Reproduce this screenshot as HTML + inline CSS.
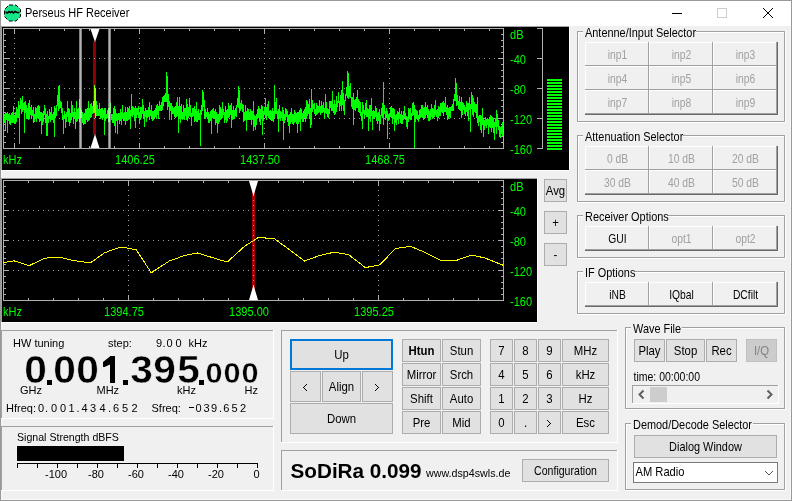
<!DOCTYPE html>
<html><head><meta charset="utf-8"><title>Perseus HF Receiver</title>
<style>html,body{margin:0;padding:0;width:792px;height:501px;overflow:hidden;background:#f0f0f0;font-family:"Liberation Sans", sans-serif}
text{shape-rendering:auto}</style></head>
<body><svg width="792" height="501" viewBox="0 0 792 501" shape-rendering="crispEdges" style="display:block;font-family:'Liberation Sans', sans-serif"><rect x="0" y="0" width="792" height="501" fill="#f0f0f0"/><rect x="0" y="0" width="792" height="26" fill="#ffffff"/><rect x="1" y="26" width="1" height="474" fill="#f8f8f8"/><rect x="790" y="26" width="1" height="474" fill="#f8f8f8"/><rect x="1" y="499" width="790" height="1" fill="#f8f8f8"/><rect x="0" y="0" width="792" height="1" fill="#999999"/><rect x="0" y="0" width="1" height="501" fill="#999999"/><rect x="791" y="0" width="1" height="501" fill="#999999"/><rect x="0" y="500" width="792" height="1" fill="#999999"/><text transform="translate(25,17) scale(0.915,1)" font-size="12" fill="#000" text-anchor="start" font-weight="normal">Perseus HF Receiver</text><polygon points="9,5 16,5 20.5,9.5 20.5,16.5 16,21 9,21 4.5,16.5 4.5,9.5" fill="#17e58a" stroke="#000" stroke-width="1" stroke-dasharray="4,2" shape-rendering="auto"/><path d="M5.5,12 L7.5,13 L9,11.5 L10.5,12.5 L12,11.5 L13.5,13 L15,11.5 L17,12.5 L19.5,12.5" fill="none" stroke="#000" stroke-width="1.6" shape-rendering="auto"/><rect x="672" y="13" width="10" height="1" fill="#000"/><rect x="717.5" y="8.5" width="9" height="9" fill="none" stroke="#cccccc" stroke-width="1"/><path d="M763,8 L773,18 M773,8 L763,18" stroke="#000" stroke-width="1.1"/><rect x="577" y="31" width="208" height="1" fill="#a0a0a0"/><rect x="577" y="31" width="1" height="91" fill="#a0a0a0"/><rect x="577" y="121" width="208" height="1" fill="#a0a0a0"/><rect x="784" y="31" width="1" height="91" fill="#a0a0a0"/><rect x="578" y="32" width="206" height="1" fill="#ffffff"/><rect x="578" y="32" width="1" height="89" fill="#ffffff"/><rect x="577" y="122" width="209" height="1" fill="#ffffff"/><rect x="785" y="31" width="1" height="92" fill="#ffffff"/><rect x="583" y="28" width="113" height="6" fill="#f0f0f0"/><text transform="translate(585,37) scale(0.91,1)" font-size="12" fill="#000" text-anchor="start" font-weight="normal">Antenne/Input Selector</text><rect x="585" y="42" width="64" height="24" fill="#a0a0a0"/><rect x="585" y="42" width="63" height="23" fill="#ffffff"/><rect x="586" y="43" width="62" height="22" fill="#f0f0f0"/><text transform="translate(617.5,59.0) scale(0.86,1)" font-size="12" fill="#a0a0a0" text-anchor="middle" font-weight="normal">inp1</text><rect x="649" y="42" width="64" height="24" fill="#a0a0a0"/><rect x="649" y="42" width="63" height="23" fill="#ffffff"/><rect x="650" y="43" width="62" height="22" fill="#f0f0f0"/><text transform="translate(681.5,59.0) scale(0.86,1)" font-size="12" fill="#a0a0a0" text-anchor="middle" font-weight="normal">inp2</text><rect x="713" y="42" width="64" height="24" fill="#a0a0a0"/><rect x="713" y="42" width="63" height="23" fill="#ffffff"/><rect x="714" y="43" width="62" height="22" fill="#f0f0f0"/><text transform="translate(745.5,59.0) scale(0.86,1)" font-size="12" fill="#a0a0a0" text-anchor="middle" font-weight="normal">inp3</text><rect x="585" y="66" width="64" height="24" fill="#a0a0a0"/><rect x="585" y="66" width="63" height="23" fill="#ffffff"/><rect x="586" y="67" width="62" height="22" fill="#f0f0f0"/><text transform="translate(617.5,83.0) scale(0.86,1)" font-size="12" fill="#a0a0a0" text-anchor="middle" font-weight="normal">inp4</text><rect x="649" y="66" width="64" height="24" fill="#a0a0a0"/><rect x="649" y="66" width="63" height="23" fill="#ffffff"/><rect x="650" y="67" width="62" height="22" fill="#f0f0f0"/><text transform="translate(681.5,83.0) scale(0.86,1)" font-size="12" fill="#a0a0a0" text-anchor="middle" font-weight="normal">inp5</text><rect x="713" y="66" width="64" height="24" fill="#a0a0a0"/><rect x="713" y="66" width="63" height="23" fill="#ffffff"/><rect x="714" y="67" width="62" height="22" fill="#f0f0f0"/><text transform="translate(745.5,83.0) scale(0.86,1)" font-size="12" fill="#a0a0a0" text-anchor="middle" font-weight="normal">inp6</text><rect x="585" y="90" width="64" height="24" fill="#a0a0a0"/><rect x="585" y="90" width="63" height="23" fill="#ffffff"/><rect x="586" y="91" width="62" height="22" fill="#f0f0f0"/><text transform="translate(617.5,107.0) scale(0.86,1)" font-size="12" fill="#a0a0a0" text-anchor="middle" font-weight="normal">inp7</text><rect x="649" y="90" width="64" height="24" fill="#a0a0a0"/><rect x="649" y="90" width="63" height="23" fill="#ffffff"/><rect x="650" y="91" width="62" height="22" fill="#f0f0f0"/><text transform="translate(681.5,107.0) scale(0.86,1)" font-size="12" fill="#a0a0a0" text-anchor="middle" font-weight="normal">inp8</text><rect x="713" y="90" width="64" height="24" fill="#a0a0a0"/><rect x="713" y="90" width="63" height="23" fill="#ffffff"/><rect x="714" y="91" width="62" height="22" fill="#f0f0f0"/><text transform="translate(745.5,107.0) scale(0.86,1)" font-size="12" fill="#a0a0a0" text-anchor="middle" font-weight="normal">inp9</text><rect x="585" y="114" width="193" height="1" fill="#696969"/><rect x="777" y="42" width="1" height="73" fill="#696969"/><rect x="577" y="135" width="208" height="1" fill="#a0a0a0"/><rect x="577" y="135" width="1" height="67" fill="#a0a0a0"/><rect x="577" y="201" width="208" height="1" fill="#a0a0a0"/><rect x="784" y="135" width="1" height="67" fill="#a0a0a0"/><rect x="578" y="136" width="206" height="1" fill="#ffffff"/><rect x="578" y="136" width="1" height="65" fill="#ffffff"/><rect x="577" y="202" width="209" height="1" fill="#ffffff"/><rect x="785" y="135" width="1" height="68" fill="#ffffff"/><rect x="583" y="132" width="100" height="6" fill="#f0f0f0"/><text transform="translate(585,141) scale(0.91,1)" font-size="12" fill="#000" text-anchor="start" font-weight="normal">Attenuation Selector</text><rect x="585" y="146" width="64" height="24" fill="#a0a0a0"/><rect x="585" y="146" width="63" height="23" fill="#ffffff"/><rect x="586" y="147" width="62" height="22" fill="#f0f0f0"/><text transform="translate(617.5,163.0) scale(0.86,1)" font-size="12" fill="#a0a0a0" text-anchor="middle" font-weight="normal">0 dB</text><rect x="649" y="146" width="64" height="24" fill="#a0a0a0"/><rect x="649" y="146" width="63" height="23" fill="#ffffff"/><rect x="650" y="147" width="62" height="22" fill="#f0f0f0"/><text transform="translate(681.5,163.0) scale(0.86,1)" font-size="12" fill="#a0a0a0" text-anchor="middle" font-weight="normal">10 dB</text><rect x="713" y="146" width="64" height="24" fill="#a0a0a0"/><rect x="713" y="146" width="63" height="23" fill="#ffffff"/><rect x="714" y="147" width="62" height="22" fill="#f0f0f0"/><text transform="translate(745.5,163.0) scale(0.86,1)" font-size="12" fill="#a0a0a0" text-anchor="middle" font-weight="normal">20 dB</text><rect x="585" y="170" width="64" height="24" fill="#a0a0a0"/><rect x="585" y="170" width="63" height="23" fill="#ffffff"/><rect x="586" y="171" width="62" height="22" fill="#f0f0f0"/><text transform="translate(617.5,187.0) scale(0.86,1)" font-size="12" fill="#a0a0a0" text-anchor="middle" font-weight="normal">30 dB</text><rect x="649" y="170" width="64" height="24" fill="#a0a0a0"/><rect x="649" y="170" width="63" height="23" fill="#ffffff"/><rect x="650" y="171" width="62" height="22" fill="#f0f0f0"/><text transform="translate(681.5,187.0) scale(0.86,1)" font-size="12" fill="#a0a0a0" text-anchor="middle" font-weight="normal">40 dB</text><rect x="713" y="170" width="64" height="24" fill="#a0a0a0"/><rect x="713" y="170" width="63" height="23" fill="#ffffff"/><rect x="714" y="171" width="62" height="22" fill="#f0f0f0"/><text transform="translate(745.5,187.0) scale(0.86,1)" font-size="12" fill="#a0a0a0" text-anchor="middle" font-weight="normal">50 dB</text><rect x="585" y="194" width="193" height="1" fill="#696969"/><rect x="777" y="146" width="1" height="49" fill="#696969"/><rect x="577" y="215" width="208" height="1" fill="#a0a0a0"/><rect x="577" y="215" width="1" height="43" fill="#a0a0a0"/><rect x="577" y="257" width="208" height="1" fill="#a0a0a0"/><rect x="784" y="215" width="1" height="43" fill="#a0a0a0"/><rect x="578" y="216" width="206" height="1" fill="#ffffff"/><rect x="578" y="216" width="1" height="41" fill="#ffffff"/><rect x="577" y="258" width="209" height="1" fill="#ffffff"/><rect x="785" y="215" width="1" height="44" fill="#ffffff"/><rect x="583" y="212" width="85" height="6" fill="#f0f0f0"/><text transform="translate(585,221) scale(0.91,1)" font-size="12" fill="#000" text-anchor="start" font-weight="normal">Receiver Options</text><rect x="585" y="226" width="64" height="24" fill="#a0a0a0"/><rect x="585" y="226" width="63" height="23" fill="#ffffff"/><rect x="586" y="227" width="62" height="22" fill="#f0f0f0"/><text transform="translate(617.5,243.0) scale(0.86,1)" font-size="12" fill="#000" text-anchor="middle" font-weight="normal">GUI</text><rect x="649" y="226" width="64" height="24" fill="#a0a0a0"/><rect x="649" y="226" width="63" height="23" fill="#ffffff"/><rect x="650" y="227" width="62" height="22" fill="#f0f0f0"/><text transform="translate(681.5,243.0) scale(0.86,1)" font-size="12" fill="#a0a0a0" text-anchor="middle" font-weight="normal">opt1</text><rect x="713" y="226" width="64" height="24" fill="#a0a0a0"/><rect x="713" y="226" width="63" height="23" fill="#ffffff"/><rect x="714" y="227" width="62" height="22" fill="#f0f0f0"/><text transform="translate(745.5,243.0) scale(0.86,1)" font-size="12" fill="#a0a0a0" text-anchor="middle" font-weight="normal">opt2</text><rect x="585" y="250" width="193" height="1" fill="#696969"/><rect x="777" y="226" width="1" height="25" fill="#696969"/><rect x="577" y="271" width="208" height="1" fill="#a0a0a0"/><rect x="577" y="271" width="1" height="43" fill="#a0a0a0"/><rect x="577" y="313" width="208" height="1" fill="#a0a0a0"/><rect x="784" y="271" width="1" height="43" fill="#a0a0a0"/><rect x="578" y="272" width="206" height="1" fill="#ffffff"/><rect x="578" y="272" width="1" height="41" fill="#ffffff"/><rect x="577" y="314" width="209" height="1" fill="#ffffff"/><rect x="785" y="271" width="1" height="44" fill="#ffffff"/><rect x="583" y="268" width="52" height="6" fill="#f0f0f0"/><text transform="translate(585,277) scale(0.91,1)" font-size="12" fill="#000" text-anchor="start" font-weight="normal">IF Options</text><rect x="585" y="282" width="64" height="24" fill="#a0a0a0"/><rect x="585" y="282" width="63" height="23" fill="#ffffff"/><rect x="586" y="283" width="62" height="22" fill="#f0f0f0"/><text transform="translate(617.5,299.0) scale(0.86,1)" font-size="12" fill="#000" text-anchor="middle" font-weight="normal">iNB</text><rect x="649" y="282" width="64" height="24" fill="#a0a0a0"/><rect x="649" y="282" width="63" height="23" fill="#ffffff"/><rect x="650" y="283" width="62" height="22" fill="#f0f0f0"/><text transform="translate(681.5,299.0) scale(0.86,1)" font-size="12" fill="#000" text-anchor="middle" font-weight="normal">IQbal</text><rect x="713" y="282" width="64" height="24" fill="#a0a0a0"/><rect x="713" y="282" width="63" height="23" fill="#ffffff"/><rect x="714" y="283" width="62" height="22" fill="#f0f0f0"/><text transform="translate(745.5,299.0) scale(0.86,1)" font-size="12" fill="#000" text-anchor="middle" font-weight="normal">DCfilt</text><rect x="585" y="306" width="193" height="1" fill="#696969"/><rect x="777" y="282" width="1" height="25" fill="#696969"/><rect x="2" y="27" width="567" height="143" fill="#000"/><rect x="1" y="26" width="568" height="1" fill="#a0a0a0"/><rect x="1" y="26" width="1" height="144" fill="#a0a0a0"/><rect x="569" y="26" width="1" height="145" fill="#ffffff"/><rect x="1" y="170" width="569" height="1" fill="#ffffff"/><rect x="9" y="58" width="1" height="1" fill="#a0a0a0"/><rect x="14" y="58" width="1" height="1" fill="#a0a0a0"/><rect x="19" y="58" width="1" height="1" fill="#a0a0a0"/><rect x="24" y="58" width="1" height="1" fill="#a0a0a0"/><rect x="29" y="58" width="1" height="1" fill="#a0a0a0"/><rect x="34" y="58" width="1" height="1" fill="#a0a0a0"/><rect x="39" y="58" width="1" height="1" fill="#a0a0a0"/><rect x="44" y="58" width="1" height="1" fill="#a0a0a0"/><rect x="49" y="58" width="1" height="1" fill="#a0a0a0"/><rect x="54" y="58" width="1" height="1" fill="#a0a0a0"/><rect x="59" y="58" width="1" height="1" fill="#a0a0a0"/><rect x="64" y="58" width="1" height="1" fill="#a0a0a0"/><rect x="69" y="58" width="1" height="1" fill="#a0a0a0"/><rect x="74" y="58" width="1" height="1" fill="#a0a0a0"/><rect x="79" y="58" width="1" height="1" fill="#a0a0a0"/><rect x="84" y="58" width="1" height="1" fill="#a0a0a0"/><rect x="89" y="58" width="1" height="1" fill="#a0a0a0"/><rect x="94" y="58" width="1" height="1" fill="#a0a0a0"/><rect x="99" y="58" width="1" height="1" fill="#a0a0a0"/><rect x="104" y="58" width="1" height="1" fill="#a0a0a0"/><rect x="109" y="58" width="1" height="1" fill="#a0a0a0"/><rect x="114" y="58" width="1" height="1" fill="#a0a0a0"/><rect x="119" y="58" width="1" height="1" fill="#a0a0a0"/><rect x="124" y="58" width="1" height="1" fill="#a0a0a0"/><rect x="129" y="58" width="1" height="1" fill="#a0a0a0"/><rect x="134" y="58" width="1" height="1" fill="#a0a0a0"/><rect x="139" y="58" width="1" height="1" fill="#a0a0a0"/><rect x="144" y="58" width="1" height="1" fill="#a0a0a0"/><rect x="149" y="58" width="1" height="1" fill="#a0a0a0"/><rect x="154" y="58" width="1" height="1" fill="#a0a0a0"/><rect x="159" y="58" width="1" height="1" fill="#a0a0a0"/><rect x="164" y="58" width="1" height="1" fill="#a0a0a0"/><rect x="169" y="58" width="1" height="1" fill="#a0a0a0"/><rect x="174" y="58" width="1" height="1" fill="#a0a0a0"/><rect x="179" y="58" width="1" height="1" fill="#a0a0a0"/><rect x="184" y="58" width="1" height="1" fill="#a0a0a0"/><rect x="189" y="58" width="1" height="1" fill="#a0a0a0"/><rect x="194" y="58" width="1" height="1" fill="#a0a0a0"/><rect x="199" y="58" width="1" height="1" fill="#a0a0a0"/><rect x="204" y="58" width="1" height="1" fill="#a0a0a0"/><rect x="209" y="58" width="1" height="1" fill="#a0a0a0"/><rect x="214" y="58" width="1" height="1" fill="#a0a0a0"/><rect x="219" y="58" width="1" height="1" fill="#a0a0a0"/><rect x="224" y="58" width="1" height="1" fill="#a0a0a0"/><rect x="229" y="58" width="1" height="1" fill="#a0a0a0"/><rect x="234" y="58" width="1" height="1" fill="#a0a0a0"/><rect x="239" y="58" width="1" height="1" fill="#a0a0a0"/><rect x="244" y="58" width="1" height="1" fill="#a0a0a0"/><rect x="249" y="58" width="1" height="1" fill="#a0a0a0"/><rect x="254" y="58" width="1" height="1" fill="#a0a0a0"/><rect x="259" y="58" width="1" height="1" fill="#a0a0a0"/><rect x="264" y="58" width="1" height="1" fill="#a0a0a0"/><rect x="269" y="58" width="1" height="1" fill="#a0a0a0"/><rect x="274" y="58" width="1" height="1" fill="#a0a0a0"/><rect x="279" y="58" width="1" height="1" fill="#a0a0a0"/><rect x="284" y="58" width="1" height="1" fill="#a0a0a0"/><rect x="289" y="58" width="1" height="1" fill="#a0a0a0"/><rect x="294" y="58" width="1" height="1" fill="#a0a0a0"/><rect x="299" y="58" width="1" height="1" fill="#a0a0a0"/><rect x="304" y="58" width="1" height="1" fill="#a0a0a0"/><rect x="309" y="58" width="1" height="1" fill="#a0a0a0"/><rect x="314" y="58" width="1" height="1" fill="#a0a0a0"/><rect x="319" y="58" width="1" height="1" fill="#a0a0a0"/><rect x="324" y="58" width="1" height="1" fill="#a0a0a0"/><rect x="329" y="58" width="1" height="1" fill="#a0a0a0"/><rect x="334" y="58" width="1" height="1" fill="#a0a0a0"/><rect x="339" y="58" width="1" height="1" fill="#a0a0a0"/><rect x="344" y="58" width="1" height="1" fill="#a0a0a0"/><rect x="349" y="58" width="1" height="1" fill="#a0a0a0"/><rect x="354" y="58" width="1" height="1" fill="#a0a0a0"/><rect x="359" y="58" width="1" height="1" fill="#a0a0a0"/><rect x="364" y="58" width="1" height="1" fill="#a0a0a0"/><rect x="369" y="58" width="1" height="1" fill="#a0a0a0"/><rect x="374" y="58" width="1" height="1" fill="#a0a0a0"/><rect x="379" y="58" width="1" height="1" fill="#a0a0a0"/><rect x="384" y="58" width="1" height="1" fill="#a0a0a0"/><rect x="389" y="58" width="1" height="1" fill="#a0a0a0"/><rect x="394" y="58" width="1" height="1" fill="#a0a0a0"/><rect x="399" y="58" width="1" height="1" fill="#a0a0a0"/><rect x="404" y="58" width="1" height="1" fill="#a0a0a0"/><rect x="409" y="58" width="1" height="1" fill="#a0a0a0"/><rect x="414" y="58" width="1" height="1" fill="#a0a0a0"/><rect x="419" y="58" width="1" height="1" fill="#a0a0a0"/><rect x="424" y="58" width="1" height="1" fill="#a0a0a0"/><rect x="429" y="58" width="1" height="1" fill="#a0a0a0"/><rect x="434" y="58" width="1" height="1" fill="#a0a0a0"/><rect x="439" y="58" width="1" height="1" fill="#a0a0a0"/><rect x="444" y="58" width="1" height="1" fill="#a0a0a0"/><rect x="449" y="58" width="1" height="1" fill="#a0a0a0"/><rect x="454" y="58" width="1" height="1" fill="#a0a0a0"/><rect x="459" y="58" width="1" height="1" fill="#a0a0a0"/><rect x="464" y="58" width="1" height="1" fill="#a0a0a0"/><rect x="469" y="58" width="1" height="1" fill="#a0a0a0"/><rect x="474" y="58" width="1" height="1" fill="#a0a0a0"/><rect x="479" y="58" width="1" height="1" fill="#a0a0a0"/><rect x="484" y="58" width="1" height="1" fill="#a0a0a0"/><rect x="489" y="58" width="1" height="1" fill="#a0a0a0"/><rect x="494" y="58" width="1" height="1" fill="#a0a0a0"/><rect x="499" y="58" width="1" height="1" fill="#a0a0a0"/><rect x="9" y="88" width="1" height="1" fill="#a0a0a0"/><rect x="14" y="88" width="1" height="1" fill="#a0a0a0"/><rect x="19" y="88" width="1" height="1" fill="#a0a0a0"/><rect x="24" y="88" width="1" height="1" fill="#a0a0a0"/><rect x="29" y="88" width="1" height="1" fill="#a0a0a0"/><rect x="34" y="88" width="1" height="1" fill="#a0a0a0"/><rect x="39" y="88" width="1" height="1" fill="#a0a0a0"/><rect x="44" y="88" width="1" height="1" fill="#a0a0a0"/><rect x="49" y="88" width="1" height="1" fill="#a0a0a0"/><rect x="54" y="88" width="1" height="1" fill="#a0a0a0"/><rect x="59" y="88" width="1" height="1" fill="#a0a0a0"/><rect x="64" y="88" width="1" height="1" fill="#a0a0a0"/><rect x="69" y="88" width="1" height="1" fill="#a0a0a0"/><rect x="74" y="88" width="1" height="1" fill="#a0a0a0"/><rect x="79" y="88" width="1" height="1" fill="#a0a0a0"/><rect x="84" y="88" width="1" height="1" fill="#a0a0a0"/><rect x="89" y="88" width="1" height="1" fill="#a0a0a0"/><rect x="94" y="88" width="1" height="1" fill="#a0a0a0"/><rect x="99" y="88" width="1" height="1" fill="#a0a0a0"/><rect x="104" y="88" width="1" height="1" fill="#a0a0a0"/><rect x="109" y="88" width="1" height="1" fill="#a0a0a0"/><rect x="114" y="88" width="1" height="1" fill="#a0a0a0"/><rect x="119" y="88" width="1" height="1" fill="#a0a0a0"/><rect x="124" y="88" width="1" height="1" fill="#a0a0a0"/><rect x="129" y="88" width="1" height="1" fill="#a0a0a0"/><rect x="134" y="88" width="1" height="1" fill="#a0a0a0"/><rect x="139" y="88" width="1" height="1" fill="#a0a0a0"/><rect x="144" y="88" width="1" height="1" fill="#a0a0a0"/><rect x="149" y="88" width="1" height="1" fill="#a0a0a0"/><rect x="154" y="88" width="1" height="1" fill="#a0a0a0"/><rect x="159" y="88" width="1" height="1" fill="#a0a0a0"/><rect x="164" y="88" width="1" height="1" fill="#a0a0a0"/><rect x="169" y="88" width="1" height="1" fill="#a0a0a0"/><rect x="174" y="88" width="1" height="1" fill="#a0a0a0"/><rect x="179" y="88" width="1" height="1" fill="#a0a0a0"/><rect x="184" y="88" width="1" height="1" fill="#a0a0a0"/><rect x="189" y="88" width="1" height="1" fill="#a0a0a0"/><rect x="194" y="88" width="1" height="1" fill="#a0a0a0"/><rect x="199" y="88" width="1" height="1" fill="#a0a0a0"/><rect x="204" y="88" width="1" height="1" fill="#a0a0a0"/><rect x="209" y="88" width="1" height="1" fill="#a0a0a0"/><rect x="214" y="88" width="1" height="1" fill="#a0a0a0"/><rect x="219" y="88" width="1" height="1" fill="#a0a0a0"/><rect x="224" y="88" width="1" height="1" fill="#a0a0a0"/><rect x="229" y="88" width="1" height="1" fill="#a0a0a0"/><rect x="234" y="88" width="1" height="1" fill="#a0a0a0"/><rect x="239" y="88" width="1" height="1" fill="#a0a0a0"/><rect x="244" y="88" width="1" height="1" fill="#a0a0a0"/><rect x="249" y="88" width="1" height="1" fill="#a0a0a0"/><rect x="254" y="88" width="1" height="1" fill="#a0a0a0"/><rect x="259" y="88" width="1" height="1" fill="#a0a0a0"/><rect x="264" y="88" width="1" height="1" fill="#a0a0a0"/><rect x="269" y="88" width="1" height="1" fill="#a0a0a0"/><rect x="274" y="88" width="1" height="1" fill="#a0a0a0"/><rect x="279" y="88" width="1" height="1" fill="#a0a0a0"/><rect x="284" y="88" width="1" height="1" fill="#a0a0a0"/><rect x="289" y="88" width="1" height="1" fill="#a0a0a0"/><rect x="294" y="88" width="1" height="1" fill="#a0a0a0"/><rect x="299" y="88" width="1" height="1" fill="#a0a0a0"/><rect x="304" y="88" width="1" height="1" fill="#a0a0a0"/><rect x="309" y="88" width="1" height="1" fill="#a0a0a0"/><rect x="314" y="88" width="1" height="1" fill="#a0a0a0"/><rect x="319" y="88" width="1" height="1" fill="#a0a0a0"/><rect x="324" y="88" width="1" height="1" fill="#a0a0a0"/><rect x="329" y="88" width="1" height="1" fill="#a0a0a0"/><rect x="334" y="88" width="1" height="1" fill="#a0a0a0"/><rect x="339" y="88" width="1" height="1" fill="#a0a0a0"/><rect x="344" y="88" width="1" height="1" fill="#a0a0a0"/><rect x="349" y="88" width="1" height="1" fill="#a0a0a0"/><rect x="354" y="88" width="1" height="1" fill="#a0a0a0"/><rect x="359" y="88" width="1" height="1" fill="#a0a0a0"/><rect x="364" y="88" width="1" height="1" fill="#a0a0a0"/><rect x="369" y="88" width="1" height="1" fill="#a0a0a0"/><rect x="374" y="88" width="1" height="1" fill="#a0a0a0"/><rect x="379" y="88" width="1" height="1" fill="#a0a0a0"/><rect x="384" y="88" width="1" height="1" fill="#a0a0a0"/><rect x="389" y="88" width="1" height="1" fill="#a0a0a0"/><rect x="394" y="88" width="1" height="1" fill="#a0a0a0"/><rect x="399" y="88" width="1" height="1" fill="#a0a0a0"/><rect x="404" y="88" width="1" height="1" fill="#a0a0a0"/><rect x="409" y="88" width="1" height="1" fill="#a0a0a0"/><rect x="414" y="88" width="1" height="1" fill="#a0a0a0"/><rect x="419" y="88" width="1" height="1" fill="#a0a0a0"/><rect x="424" y="88" width="1" height="1" fill="#a0a0a0"/><rect x="429" y="88" width="1" height="1" fill="#a0a0a0"/><rect x="434" y="88" width="1" height="1" fill="#a0a0a0"/><rect x="439" y="88" width="1" height="1" fill="#a0a0a0"/><rect x="444" y="88" width="1" height="1" fill="#a0a0a0"/><rect x="449" y="88" width="1" height="1" fill="#a0a0a0"/><rect x="454" y="88" width="1" height="1" fill="#a0a0a0"/><rect x="459" y="88" width="1" height="1" fill="#a0a0a0"/><rect x="464" y="88" width="1" height="1" fill="#a0a0a0"/><rect x="469" y="88" width="1" height="1" fill="#a0a0a0"/><rect x="474" y="88" width="1" height="1" fill="#a0a0a0"/><rect x="479" y="88" width="1" height="1" fill="#a0a0a0"/><rect x="484" y="88" width="1" height="1" fill="#a0a0a0"/><rect x="489" y="88" width="1" height="1" fill="#a0a0a0"/><rect x="494" y="88" width="1" height="1" fill="#a0a0a0"/><rect x="499" y="88" width="1" height="1" fill="#a0a0a0"/><rect x="9" y="118" width="1" height="1" fill="#a0a0a0"/><rect x="14" y="118" width="1" height="1" fill="#a0a0a0"/><rect x="19" y="118" width="1" height="1" fill="#a0a0a0"/><rect x="24" y="118" width="1" height="1" fill="#a0a0a0"/><rect x="29" y="118" width="1" height="1" fill="#a0a0a0"/><rect x="34" y="118" width="1" height="1" fill="#a0a0a0"/><rect x="39" y="118" width="1" height="1" fill="#a0a0a0"/><rect x="44" y="118" width="1" height="1" fill="#a0a0a0"/><rect x="49" y="118" width="1" height="1" fill="#a0a0a0"/><rect x="54" y="118" width="1" height="1" fill="#a0a0a0"/><rect x="59" y="118" width="1" height="1" fill="#a0a0a0"/><rect x="64" y="118" width="1" height="1" fill="#a0a0a0"/><rect x="69" y="118" width="1" height="1" fill="#a0a0a0"/><rect x="74" y="118" width="1" height="1" fill="#a0a0a0"/><rect x="79" y="118" width="1" height="1" fill="#a0a0a0"/><rect x="84" y="118" width="1" height="1" fill="#a0a0a0"/><rect x="89" y="118" width="1" height="1" fill="#a0a0a0"/><rect x="94" y="118" width="1" height="1" fill="#a0a0a0"/><rect x="99" y="118" width="1" height="1" fill="#a0a0a0"/><rect x="104" y="118" width="1" height="1" fill="#a0a0a0"/><rect x="109" y="118" width="1" height="1" fill="#a0a0a0"/><rect x="114" y="118" width="1" height="1" fill="#a0a0a0"/><rect x="119" y="118" width="1" height="1" fill="#a0a0a0"/><rect x="124" y="118" width="1" height="1" fill="#a0a0a0"/><rect x="129" y="118" width="1" height="1" fill="#a0a0a0"/><rect x="134" y="118" width="1" height="1" fill="#a0a0a0"/><rect x="139" y="118" width="1" height="1" fill="#a0a0a0"/><rect x="144" y="118" width="1" height="1" fill="#a0a0a0"/><rect x="149" y="118" width="1" height="1" fill="#a0a0a0"/><rect x="154" y="118" width="1" height="1" fill="#a0a0a0"/><rect x="159" y="118" width="1" height="1" fill="#a0a0a0"/><rect x="164" y="118" width="1" height="1" fill="#a0a0a0"/><rect x="169" y="118" width="1" height="1" fill="#a0a0a0"/><rect x="174" y="118" width="1" height="1" fill="#a0a0a0"/><rect x="179" y="118" width="1" height="1" fill="#a0a0a0"/><rect x="184" y="118" width="1" height="1" fill="#a0a0a0"/><rect x="189" y="118" width="1" height="1" fill="#a0a0a0"/><rect x="194" y="118" width="1" height="1" fill="#a0a0a0"/><rect x="199" y="118" width="1" height="1" fill="#a0a0a0"/><rect x="204" y="118" width="1" height="1" fill="#a0a0a0"/><rect x="209" y="118" width="1" height="1" fill="#a0a0a0"/><rect x="214" y="118" width="1" height="1" fill="#a0a0a0"/><rect x="219" y="118" width="1" height="1" fill="#a0a0a0"/><rect x="224" y="118" width="1" height="1" fill="#a0a0a0"/><rect x="229" y="118" width="1" height="1" fill="#a0a0a0"/><rect x="234" y="118" width="1" height="1" fill="#a0a0a0"/><rect x="239" y="118" width="1" height="1" fill="#a0a0a0"/><rect x="244" y="118" width="1" height="1" fill="#a0a0a0"/><rect x="249" y="118" width="1" height="1" fill="#a0a0a0"/><rect x="254" y="118" width="1" height="1" fill="#a0a0a0"/><rect x="259" y="118" width="1" height="1" fill="#a0a0a0"/><rect x="264" y="118" width="1" height="1" fill="#a0a0a0"/><rect x="269" y="118" width="1" height="1" fill="#a0a0a0"/><rect x="274" y="118" width="1" height="1" fill="#a0a0a0"/><rect x="279" y="118" width="1" height="1" fill="#a0a0a0"/><rect x="284" y="118" width="1" height="1" fill="#a0a0a0"/><rect x="289" y="118" width="1" height="1" fill="#a0a0a0"/><rect x="294" y="118" width="1" height="1" fill="#a0a0a0"/><rect x="299" y="118" width="1" height="1" fill="#a0a0a0"/><rect x="304" y="118" width="1" height="1" fill="#a0a0a0"/><rect x="309" y="118" width="1" height="1" fill="#a0a0a0"/><rect x="314" y="118" width="1" height="1" fill="#a0a0a0"/><rect x="319" y="118" width="1" height="1" fill="#a0a0a0"/><rect x="324" y="118" width="1" height="1" fill="#a0a0a0"/><rect x="329" y="118" width="1" height="1" fill="#a0a0a0"/><rect x="334" y="118" width="1" height="1" fill="#a0a0a0"/><rect x="339" y="118" width="1" height="1" fill="#a0a0a0"/><rect x="344" y="118" width="1" height="1" fill="#a0a0a0"/><rect x="349" y="118" width="1" height="1" fill="#a0a0a0"/><rect x="354" y="118" width="1" height="1" fill="#a0a0a0"/><rect x="359" y="118" width="1" height="1" fill="#a0a0a0"/><rect x="364" y="118" width="1" height="1" fill="#a0a0a0"/><rect x="369" y="118" width="1" height="1" fill="#a0a0a0"/><rect x="374" y="118" width="1" height="1" fill="#a0a0a0"/><rect x="379" y="118" width="1" height="1" fill="#a0a0a0"/><rect x="384" y="118" width="1" height="1" fill="#a0a0a0"/><rect x="389" y="118" width="1" height="1" fill="#a0a0a0"/><rect x="394" y="118" width="1" height="1" fill="#a0a0a0"/><rect x="399" y="118" width="1" height="1" fill="#a0a0a0"/><rect x="404" y="118" width="1" height="1" fill="#a0a0a0"/><rect x="409" y="118" width="1" height="1" fill="#a0a0a0"/><rect x="414" y="118" width="1" height="1" fill="#a0a0a0"/><rect x="419" y="118" width="1" height="1" fill="#a0a0a0"/><rect x="424" y="118" width="1" height="1" fill="#a0a0a0"/><rect x="429" y="118" width="1" height="1" fill="#a0a0a0"/><rect x="434" y="118" width="1" height="1" fill="#a0a0a0"/><rect x="439" y="118" width="1" height="1" fill="#a0a0a0"/><rect x="444" y="118" width="1" height="1" fill="#a0a0a0"/><rect x="449" y="118" width="1" height="1" fill="#a0a0a0"/><rect x="454" y="118" width="1" height="1" fill="#a0a0a0"/><rect x="459" y="118" width="1" height="1" fill="#a0a0a0"/><rect x="464" y="118" width="1" height="1" fill="#a0a0a0"/><rect x="469" y="118" width="1" height="1" fill="#a0a0a0"/><rect x="474" y="118" width="1" height="1" fill="#a0a0a0"/><rect x="479" y="118" width="1" height="1" fill="#a0a0a0"/><rect x="484" y="118" width="1" height="1" fill="#a0a0a0"/><rect x="489" y="118" width="1" height="1" fill="#a0a0a0"/><rect x="494" y="118" width="1" height="1" fill="#a0a0a0"/><rect x="499" y="118" width="1" height="1" fill="#a0a0a0"/><rect x="14" y="33" width="1" height="1" fill="#a0a0a0"/><rect x="14" y="38" width="1" height="1" fill="#a0a0a0"/><rect x="14" y="43" width="1" height="1" fill="#a0a0a0"/><rect x="14" y="48" width="1" height="1" fill="#a0a0a0"/><rect x="14" y="53" width="1" height="1" fill="#a0a0a0"/><rect x="14" y="58" width="1" height="1" fill="#a0a0a0"/><rect x="14" y="63" width="1" height="1" fill="#a0a0a0"/><rect x="14" y="68" width="1" height="1" fill="#a0a0a0"/><rect x="14" y="73" width="1" height="1" fill="#a0a0a0"/><rect x="14" y="78" width="1" height="1" fill="#a0a0a0"/><rect x="14" y="83" width="1" height="1" fill="#a0a0a0"/><rect x="14" y="88" width="1" height="1" fill="#a0a0a0"/><rect x="14" y="93" width="1" height="1" fill="#a0a0a0"/><rect x="14" y="98" width="1" height="1" fill="#a0a0a0"/><rect x="14" y="103" width="1" height="1" fill="#a0a0a0"/><rect x="14" y="108" width="1" height="1" fill="#a0a0a0"/><rect x="14" y="113" width="1" height="1" fill="#a0a0a0"/><rect x="14" y="118" width="1" height="1" fill="#a0a0a0"/><rect x="14" y="123" width="1" height="1" fill="#a0a0a0"/><rect x="14" y="128" width="1" height="1" fill="#a0a0a0"/><rect x="14" y="133" width="1" height="1" fill="#a0a0a0"/><rect x="14" y="138" width="1" height="1" fill="#a0a0a0"/><rect x="14" y="143" width="1" height="1" fill="#a0a0a0"/><rect x="139" y="33" width="1" height="1" fill="#a0a0a0"/><rect x="139" y="38" width="1" height="1" fill="#a0a0a0"/><rect x="139" y="43" width="1" height="1" fill="#a0a0a0"/><rect x="139" y="48" width="1" height="1" fill="#a0a0a0"/><rect x="139" y="53" width="1" height="1" fill="#a0a0a0"/><rect x="139" y="58" width="1" height="1" fill="#a0a0a0"/><rect x="139" y="63" width="1" height="1" fill="#a0a0a0"/><rect x="139" y="68" width="1" height="1" fill="#a0a0a0"/><rect x="139" y="73" width="1" height="1" fill="#a0a0a0"/><rect x="139" y="78" width="1" height="1" fill="#a0a0a0"/><rect x="139" y="83" width="1" height="1" fill="#a0a0a0"/><rect x="139" y="88" width="1" height="1" fill="#a0a0a0"/><rect x="139" y="93" width="1" height="1" fill="#a0a0a0"/><rect x="139" y="98" width="1" height="1" fill="#a0a0a0"/><rect x="139" y="103" width="1" height="1" fill="#a0a0a0"/><rect x="139" y="108" width="1" height="1" fill="#a0a0a0"/><rect x="139" y="113" width="1" height="1" fill="#a0a0a0"/><rect x="139" y="118" width="1" height="1" fill="#a0a0a0"/><rect x="139" y="123" width="1" height="1" fill="#a0a0a0"/><rect x="139" y="128" width="1" height="1" fill="#a0a0a0"/><rect x="139" y="133" width="1" height="1" fill="#a0a0a0"/><rect x="139" y="138" width="1" height="1" fill="#a0a0a0"/><rect x="139" y="143" width="1" height="1" fill="#a0a0a0"/><rect x="264" y="33" width="1" height="1" fill="#a0a0a0"/><rect x="264" y="38" width="1" height="1" fill="#a0a0a0"/><rect x="264" y="43" width="1" height="1" fill="#a0a0a0"/><rect x="264" y="48" width="1" height="1" fill="#a0a0a0"/><rect x="264" y="53" width="1" height="1" fill="#a0a0a0"/><rect x="264" y="58" width="1" height="1" fill="#a0a0a0"/><rect x="264" y="63" width="1" height="1" fill="#a0a0a0"/><rect x="264" y="68" width="1" height="1" fill="#a0a0a0"/><rect x="264" y="73" width="1" height="1" fill="#a0a0a0"/><rect x="264" y="78" width="1" height="1" fill="#a0a0a0"/><rect x="264" y="83" width="1" height="1" fill="#a0a0a0"/><rect x="264" y="88" width="1" height="1" fill="#a0a0a0"/><rect x="264" y="93" width="1" height="1" fill="#a0a0a0"/><rect x="264" y="98" width="1" height="1" fill="#a0a0a0"/><rect x="264" y="103" width="1" height="1" fill="#a0a0a0"/><rect x="264" y="108" width="1" height="1" fill="#a0a0a0"/><rect x="264" y="113" width="1" height="1" fill="#a0a0a0"/><rect x="264" y="118" width="1" height="1" fill="#a0a0a0"/><rect x="264" y="123" width="1" height="1" fill="#a0a0a0"/><rect x="264" y="128" width="1" height="1" fill="#a0a0a0"/><rect x="264" y="133" width="1" height="1" fill="#a0a0a0"/><rect x="264" y="138" width="1" height="1" fill="#a0a0a0"/><rect x="264" y="143" width="1" height="1" fill="#a0a0a0"/><rect x="389" y="33" width="1" height="1" fill="#a0a0a0"/><rect x="389" y="38" width="1" height="1" fill="#a0a0a0"/><rect x="389" y="43" width="1" height="1" fill="#a0a0a0"/><rect x="389" y="48" width="1" height="1" fill="#a0a0a0"/><rect x="389" y="53" width="1" height="1" fill="#a0a0a0"/><rect x="389" y="58" width="1" height="1" fill="#a0a0a0"/><rect x="389" y="63" width="1" height="1" fill="#a0a0a0"/><rect x="389" y="68" width="1" height="1" fill="#a0a0a0"/><rect x="389" y="73" width="1" height="1" fill="#a0a0a0"/><rect x="389" y="78" width="1" height="1" fill="#a0a0a0"/><rect x="389" y="83" width="1" height="1" fill="#a0a0a0"/><rect x="389" y="88" width="1" height="1" fill="#a0a0a0"/><rect x="389" y="93" width="1" height="1" fill="#a0a0a0"/><rect x="389" y="98" width="1" height="1" fill="#a0a0a0"/><rect x="389" y="103" width="1" height="1" fill="#a0a0a0"/><rect x="389" y="108" width="1" height="1" fill="#a0a0a0"/><rect x="389" y="113" width="1" height="1" fill="#a0a0a0"/><rect x="389" y="118" width="1" height="1" fill="#a0a0a0"/><rect x="389" y="123" width="1" height="1" fill="#a0a0a0"/><rect x="389" y="128" width="1" height="1" fill="#a0a0a0"/><rect x="389" y="133" width="1" height="1" fill="#a0a0a0"/><rect x="389" y="138" width="1" height="1" fill="#a0a0a0"/><rect x="389" y="143" width="1" height="1" fill="#a0a0a0"/><rect x="3" y="28" width="501" height="1" fill="#b0b0b0"/><rect x="3" y="148" width="501" height="1" fill="#b0b0b0"/><rect x="3" y="28" width="1" height="121" fill="#b0b0b0"/><rect x="503" y="28" width="1" height="121" fill="#b0b0b0"/><rect x="14" y="29" width="1" height="5" fill="#b0b0b0"/><rect x="14" y="143" width="1" height="5" fill="#b0b0b0"/><rect x="39" y="29" width="1" height="2" fill="#b0b0b0"/><rect x="39" y="146" width="1" height="2" fill="#b0b0b0"/><rect x="64" y="29" width="1" height="2" fill="#b0b0b0"/><rect x="64" y="146" width="1" height="2" fill="#b0b0b0"/><rect x="89" y="29" width="1" height="2" fill="#b0b0b0"/><rect x="89" y="146" width="1" height="2" fill="#b0b0b0"/><rect x="114" y="29" width="1" height="2" fill="#b0b0b0"/><rect x="114" y="146" width="1" height="2" fill="#b0b0b0"/><rect x="139" y="29" width="1" height="5" fill="#b0b0b0"/><rect x="139" y="143" width="1" height="5" fill="#b0b0b0"/><rect x="164" y="29" width="1" height="2" fill="#b0b0b0"/><rect x="164" y="146" width="1" height="2" fill="#b0b0b0"/><rect x="189" y="29" width="1" height="2" fill="#b0b0b0"/><rect x="189" y="146" width="1" height="2" fill="#b0b0b0"/><rect x="214" y="29" width="1" height="2" fill="#b0b0b0"/><rect x="214" y="146" width="1" height="2" fill="#b0b0b0"/><rect x="239" y="29" width="1" height="2" fill="#b0b0b0"/><rect x="239" y="146" width="1" height="2" fill="#b0b0b0"/><rect x="264" y="29" width="1" height="5" fill="#b0b0b0"/><rect x="264" y="143" width="1" height="5" fill="#b0b0b0"/><rect x="289" y="29" width="1" height="2" fill="#b0b0b0"/><rect x="289" y="146" width="1" height="2" fill="#b0b0b0"/><rect x="314" y="29" width="1" height="2" fill="#b0b0b0"/><rect x="314" y="146" width="1" height="2" fill="#b0b0b0"/><rect x="339" y="29" width="1" height="2" fill="#b0b0b0"/><rect x="339" y="146" width="1" height="2" fill="#b0b0b0"/><rect x="364" y="29" width="1" height="2" fill="#b0b0b0"/><rect x="364" y="146" width="1" height="2" fill="#b0b0b0"/><rect x="389" y="29" width="1" height="5" fill="#b0b0b0"/><rect x="389" y="143" width="1" height="5" fill="#b0b0b0"/><rect x="414" y="29" width="1" height="2" fill="#b0b0b0"/><rect x="414" y="146" width="1" height="2" fill="#b0b0b0"/><rect x="439" y="29" width="1" height="2" fill="#b0b0b0"/><rect x="439" y="146" width="1" height="2" fill="#b0b0b0"/><rect x="464" y="29" width="1" height="2" fill="#b0b0b0"/><rect x="464" y="146" width="1" height="2" fill="#b0b0b0"/><rect x="489" y="29" width="1" height="2" fill="#b0b0b0"/><rect x="489" y="146" width="1" height="2" fill="#b0b0b0"/><rect x="4" y="34" width="2" height="1" fill="#b0b0b0"/><rect x="501" y="34" width="2" height="1" fill="#b0b0b0"/><rect x="4" y="40" width="2" height="1" fill="#b0b0b0"/><rect x="501" y="40" width="2" height="1" fill="#b0b0b0"/><rect x="4" y="46" width="2" height="1" fill="#b0b0b0"/><rect x="501" y="46" width="2" height="1" fill="#b0b0b0"/><rect x="4" y="52" width="2" height="1" fill="#b0b0b0"/><rect x="501" y="52" width="2" height="1" fill="#b0b0b0"/><rect x="4" y="58" width="5" height="1" fill="#b0b0b0"/><rect x="498" y="58" width="5" height="1" fill="#b0b0b0"/><rect x="4" y="64" width="2" height="1" fill="#b0b0b0"/><rect x="501" y="64" width="2" height="1" fill="#b0b0b0"/><rect x="4" y="70" width="2" height="1" fill="#b0b0b0"/><rect x="501" y="70" width="2" height="1" fill="#b0b0b0"/><rect x="4" y="76" width="2" height="1" fill="#b0b0b0"/><rect x="501" y="76" width="2" height="1" fill="#b0b0b0"/><rect x="4" y="82" width="2" height="1" fill="#b0b0b0"/><rect x="501" y="82" width="2" height="1" fill="#b0b0b0"/><rect x="4" y="88" width="5" height="1" fill="#b0b0b0"/><rect x="498" y="88" width="5" height="1" fill="#b0b0b0"/><rect x="4" y="94" width="2" height="1" fill="#b0b0b0"/><rect x="501" y="94" width="2" height="1" fill="#b0b0b0"/><rect x="4" y="100" width="2" height="1" fill="#b0b0b0"/><rect x="501" y="100" width="2" height="1" fill="#b0b0b0"/><rect x="4" y="106" width="2" height="1" fill="#b0b0b0"/><rect x="501" y="106" width="2" height="1" fill="#b0b0b0"/><rect x="4" y="112" width="2" height="1" fill="#b0b0b0"/><rect x="501" y="112" width="2" height="1" fill="#b0b0b0"/><rect x="4" y="118" width="5" height="1" fill="#b0b0b0"/><rect x="498" y="118" width="5" height="1" fill="#b0b0b0"/><rect x="4" y="124" width="2" height="1" fill="#b0b0b0"/><rect x="501" y="124" width="2" height="1" fill="#b0b0b0"/><rect x="4" y="130" width="2" height="1" fill="#b0b0b0"/><rect x="501" y="130" width="2" height="1" fill="#b0b0b0"/><rect x="4" y="136" width="2" height="1" fill="#b0b0b0"/><rect x="501" y="136" width="2" height="1" fill="#b0b0b0"/><rect x="4" y="142" width="2" height="1" fill="#b0b0b0"/><rect x="501" y="142" width="2" height="1" fill="#b0b0b0"/><path d="M4.5,114V123M5.5,112V130M6.5,113V120M7.5,112V133M8.5,114V121M9.5,113V124M10.5,115V125M11.5,113V123M12.5,112V123M13.5,106V123M14.5,115V124M15.5,112V124M16.5,107V122M17.5,109V118M18.5,101V118M19.5,105V144M20.5,98V109M21.5,100V114M22.5,96V112M23.5,103V110M24.5,102V133M25.5,101V113M26.5,105V119M27.5,108V119M28.5,103V120M29.5,100V119M30.5,107V115M31.5,105V119M32.5,110V116M33.5,107V123M34.5,114V122M35.5,107V119M36.5,108V122M37.5,106V118M38.5,105V119M39.5,106V122M40.5,112V121M41.5,112V134M42.5,113V125M43.5,111V122M44.5,105V115M45.5,108V123M46.5,114V136M47.5,111V136M48.5,116V123M49.5,109V119M50.5,112V122M51.5,107V120M52.5,114V120M53.5,112V123M54.5,106V137M55.5,108V118M56.5,105V116M57.5,95V106M58.5,86V111M59.5,85V109M60.5,101V108M61.5,102V113M62.5,108V120M63.5,115V134M64.5,111V119M65.5,114V128M66.5,112V122M67.5,101V117M68.5,108V122M69.5,109V126M70.5,113V123M71.5,101V120M72.5,105V117M73.5,112V124M74.5,108V119M75.5,112V129M76.5,101V122M77.5,109V121M78.5,108V119M79.5,99V122M80.5,108V118M81.5,110V118M82.5,112V123M83.5,114V125M84.5,113V124M85.5,109V124M86.5,109V120M87.5,108V122M88.5,101V121M89.5,108V120M90.5,104V118M91.5,103V117M92.5,106V114M93.5,101V113M94.5,85V113M95.5,88V118M96.5,101V116M97.5,105V116M98.5,109V116M99.5,103V116M100.5,109V119M101.5,108V118M102.5,108V120M103.5,110V118M104.5,108V135M105.5,108V121M106.5,114V119M107.5,110V118M108.5,108V122M109.5,108V122M110.5,103V113M111.5,114V120M112.5,114V123M113.5,108V123M114.5,106V126M115.5,109V133M116.5,113V121M117.5,114V134M118.5,113V120M119.5,113V124M120.5,109V121M121.5,112V125M122.5,105V119M123.5,113V121M124.5,112V121M125.5,107V125M126.5,112V121M127.5,107V121M128.5,108V120M129.5,106V119M130.5,110V129M131.5,94V116M132.5,106V117M133.5,107V115M134.5,108V121M135.5,106V128M136.5,108V118M137.5,108V115M138.5,106V118M139.5,112V123M140.5,107V120M141.5,107V118M142.5,99V114M143.5,105V119M144.5,111V127M145.5,108V117M146.5,110V122M147.5,110V118M148.5,107V117M149.5,102V120M150.5,110V116M151.5,105V119M152.5,111V121M153.5,111V120M154.5,110V118M155.5,108V117M156.5,105V119M157.5,104V115M158.5,106V119M159.5,101V111M160.5,105V111M161.5,102V111M162.5,97V110M163.5,96V106M164.5,95V102M165.5,93V102M166.5,72V102M167.5,76V110M168.5,94V107M169.5,101V120M170.5,103V111M171.5,103V120M172.5,106V114M173.5,108V114M174.5,107V117M175.5,106V118M176.5,102V117M177.5,97V116M178.5,106V133M179.5,97V118M180.5,106V123M181.5,104V119M182.5,112V120M183.5,105V119M184.5,108V120M185.5,108V116M186.5,99V120M187.5,104V121M188.5,107V118M189.5,98V116M190.5,105V117M191.5,113V126M192.5,108V117M193.5,108V116M194.5,106V122M195.5,109V121M196.5,102V122M197.5,111V122M198.5,109V120M199.5,113V120M200.5,110V146M201.5,105V115M202.5,90V111M203.5,92V107M204.5,100V119M205.5,109V119M206.5,112V117M207.5,108V119M208.5,112V123M209.5,114V123M210.5,111V121M211.5,110V134M212.5,109V118M213.5,108V119M214.5,111V119M215.5,109V125M216.5,112V123M217.5,114V133M218.5,114V124M219.5,105V122M220.5,107V120M221.5,109V119M222.5,102V118M223.5,109V115M224.5,112V123M225.5,106V120M226.5,110V123M227.5,109V121M228.5,103V118M229.5,106V117M230.5,105V115M231.5,103V128M232.5,110V120M233.5,106V119M234.5,110V119M235.5,108V116M236.5,105V117M237.5,98V107M238.5,86V108M239.5,90V113M240.5,103V111M241.5,100V109M242.5,104V112M243.5,105V122M244.5,112V121M245.5,105V120M246.5,111V131M247.5,108V120M248.5,109V120M249.5,112V120M250.5,109V120M251.5,111V125M252.5,111V120M253.5,101V131M254.5,115V127M255.5,116V130M256.5,114V125M257.5,109V119M258.5,106V118M259.5,108V122M260.5,109V125M261.5,105V119M262.5,106V135M263.5,111V121M264.5,107V115M265.5,98V118M266.5,107V120M267.5,104V116M268.5,101V118M269.5,111V118M270.5,110V120M271.5,111V121M272.5,108V121M273.5,111V122M274.5,85V118M275.5,102V114M276.5,98V114M277.5,111V119M278.5,109V132M279.5,105V119M280.5,111V121M281.5,112V118M282.5,107V121M283.5,110V140M284.5,114V123M285.5,108V120M286.5,109V117M287.5,111V122M288.5,115V126M289.5,114V133M290.5,112V124M291.5,108V122M292.5,114V124M293.5,114V125M294.5,110V123M295.5,112V122M296.5,113V124M297.5,112V133M298.5,112V124M299.5,110V122M300.5,108V131M301.5,109V119M302.5,113V122M303.5,111V122M304.5,109V118M305.5,107V122M306.5,100V119M307.5,101V116M308.5,104V114M309.5,99V118M310.5,108V128M311.5,89V125M312.5,100V112M313.5,104V109M314.5,103V114M315.5,109V116M316.5,103V115M317.5,105V114M318.5,106V113M319.5,100V112M320.5,106V115M321.5,101V113M322.5,105V113M323.5,102V112M324.5,108V119M325.5,94V113M326.5,102V114M327.5,108V117M328.5,109V118M329.5,101V114M330.5,101V108M331.5,101V111M332.5,91V111M333.5,104V113M334.5,100V115M335.5,104V114M336.5,96V112M337.5,101V107M338.5,92V103M339.5,101V111M340.5,95V106M341.5,90V111M342.5,81V105M343.5,93V111M344.5,100V115M345.5,94V101M346.5,87V96M347.5,71V98M348.5,73V99M349.5,86V97M350.5,83V98M351.5,97V107M352.5,97V109M353.5,93V125M354.5,100V110M355.5,99V111M356.5,97V108M357.5,90V108M358.5,99V112M359.5,101V113M360.5,102V116M361.5,112V121M362.5,102V129M363.5,105V114M364.5,110V118M365.5,103V115M366.5,100V117M367.5,108V117M368.5,109V131M369.5,105V119M370.5,105V122M371.5,98V116M372.5,111V130M373.5,110V119M374.5,111V118M375.5,106V117M376.5,108V121M377.5,113V124M378.5,112V121M379.5,109V131M380.5,115V124M381.5,108V116M382.5,103V118M383.5,82V125M384.5,105V114M385.5,111V120M386.5,108V118M387.5,111V139M388.5,114V121M389.5,113V120M390.5,107V117M391.5,106V118M392.5,108V124M393.5,108V119M394.5,109V131M395.5,115V123M396.5,114V125M397.5,111V120M398.5,112V124M399.5,108V119M400.5,114V123M401.5,111V124M402.5,115V124M403.5,111V120M404.5,106V118M405.5,113V120M406.5,116V127M407.5,117V129M408.5,108V122M409.5,109V119M410.5,108V120M411.5,113V120M412.5,103V116M413.5,102V115M414.5,105V148M415.5,109V122M416.5,110V119M417.5,111V120M418.5,115V122M419.5,110V119M420.5,109V118M421.5,105V117M422.5,105V118M423.5,108V120M424.5,107V118M425.5,102V118M426.5,107V115M427.5,105V118M428.5,109V121M429.5,111V121M430.5,109V120M431.5,104V117M432.5,108V119M433.5,109V118M434.5,105V117M435.5,100V115M436.5,110V117M437.5,109V121M438.5,106V118M439.5,107V116M440.5,103V116M441.5,103V112M442.5,102V113M443.5,101V116M444.5,103V112M445.5,97V112M446.5,107V115M447.5,105V120M448.5,108V119M449.5,107V117M450.5,107V118M451.5,106V111M452.5,104V111M453.5,99V111M454.5,94V101M455.5,78V101M456.5,83V106M457.5,95V105M458.5,101V109M459.5,96V110M460.5,102V111M461.5,97V118M462.5,102V115M463.5,103V110M464.5,105V114M465.5,107V116M466.5,101V112M467.5,103V116M468.5,103V121M469.5,97V110M470.5,104V132M471.5,92V109M472.5,95V115M473.5,98V117M474.5,102V112M475.5,104V113M476.5,104V118M477.5,97V123M478.5,116V126M479.5,115V122M480.5,115V130M481.5,116V133M482.5,108V125M483.5,118V137M484.5,120V130M485.5,117V126M486.5,119V128M487.5,118V125M488.5,119V134M489.5,117V127M490.5,115V128M491.5,116V132M492.5,117V128M493.5,118V133M494.5,122V140M495.5,118V127M496.5,110V134M497.5,114V127M498.5,120V130M499.5,126V137M500.5,127V138M501.5,126V134M502.5,122V136" stroke="#00ff00" stroke-width="1" fill="none"/><g style="mix-blend-mode:lighten"><rect x="79" y="29" width="3" height="119" fill="#808080"/><rect x="80" y="29" width="1" height="119" fill="#b4b4b4"/><rect x="108" y="29" width="3" height="119" fill="#808080"/><rect x="109" y="29" width="1" height="119" fill="#b4b4b4"/><rect x="93" y="41" width="3" height="94" fill="#900000"/></g><polygon points="90.5,29 99.5,29 95,42" fill="#fff" shape-rendering="auto"/><polygon points="90.5,148 99.5,148 95,134" fill="#fff" shape-rendering="auto"/><text transform="translate(510,39) scale(0.92,1)" font-size="12" fill="#00ff00" text-anchor="start" font-weight="normal">dB</text><text transform="translate(510,64) scale(0.92,1)" font-size="12" fill="#00ff00" text-anchor="start" font-weight="normal">-40</text><text transform="translate(510,94) scale(0.92,1)" font-size="12" fill="#00ff00" text-anchor="start" font-weight="normal">-80</text><text transform="translate(510,124) scale(0.92,1)" font-size="12" fill="#00ff00" text-anchor="start" font-weight="normal">-120</text><text transform="translate(510,154) scale(0.92,1)" font-size="12" fill="#00ff00" text-anchor="start" font-weight="normal">-160</text><text transform="translate(3,164) scale(0.92,1)" font-size="12" fill="#00ff00" text-anchor="start" font-weight="normal">kHz</text><text transform="translate(135,164) scale(0.92,1)" font-size="12" fill="#00ff00" text-anchor="middle" font-weight="normal">1406.25</text><text transform="translate(260,164) scale(0.92,1)" font-size="12" fill="#00ff00" text-anchor="middle" font-weight="normal">1437.50</text><text transform="translate(385,164) scale(0.92,1)" font-size="12" fill="#00ff00" text-anchor="middle" font-weight="normal">1468.75</text><rect x="542" y="28" width="1" height="121" fill="#b0b0b0"/><rect x="537" y="28" width="5" height="1" fill="#b0b0b0"/><rect x="537" y="58" width="5" height="1" fill="#b0b0b0"/><rect x="537" y="88" width="5" height="1" fill="#b0b0b0"/><rect x="537" y="118" width="5" height="1" fill="#b0b0b0"/><rect x="537" y="148" width="5" height="1" fill="#b0b0b0"/><rect x="547" y="79" width="15" height="2" fill="#00ff00"/><rect x="547" y="82" width="15" height="2" fill="#00ff00"/><rect x="547" y="85" width="15" height="2" fill="#00ff00"/><rect x="547" y="88" width="15" height="2" fill="#00ff00"/><rect x="547" y="91" width="15" height="2" fill="#00ff00"/><rect x="547" y="94" width="15" height="2" fill="#00ff00"/><rect x="547" y="97" width="15" height="2" fill="#00ff00"/><rect x="547" y="100" width="15" height="2" fill="#00ff00"/><rect x="547" y="103" width="15" height="2" fill="#00ff00"/><rect x="547" y="106" width="15" height="2" fill="#00ff00"/><rect x="547" y="109" width="15" height="2" fill="#00ff00"/><rect x="547" y="112" width="15" height="2" fill="#00ff00"/><rect x="547" y="115" width="15" height="2" fill="#00ff00"/><rect x="547" y="118" width="15" height="2" fill="#00ff00"/><rect x="547" y="121" width="15" height="2" fill="#00ff00"/><rect x="547" y="124" width="15" height="2" fill="#00ff00"/><rect x="547" y="127" width="15" height="2" fill="#00ff00"/><rect x="547" y="130" width="15" height="2" fill="#00ff00"/><rect x="547" y="133" width="15" height="2" fill="#00ff00"/><rect x="547" y="136" width="15" height="2" fill="#00ff00"/><rect x="547" y="139" width="15" height="2" fill="#00ff00"/><rect x="547" y="142" width="15" height="2" fill="#00ff00"/><rect x="547" y="145" width="15" height="2" fill="#00ff00"/><rect x="547" y="148" width="15" height="2" fill="#00ff00"/><rect x="2" y="179" width="535" height="143" fill="#000"/><rect x="1" y="178" width="536" height="1" fill="#a0a0a0"/><rect x="1" y="178" width="1" height="144" fill="#a0a0a0"/><rect x="537" y="178" width="1" height="145" fill="#ffffff"/><rect x="1" y="322" width="537" height="1" fill="#ffffff"/><rect x="8" y="210" width="1" height="1" fill="#a0a0a0"/><rect x="13" y="210" width="1" height="1" fill="#a0a0a0"/><rect x="18" y="210" width="1" height="1" fill="#a0a0a0"/><rect x="23" y="210" width="1" height="1" fill="#a0a0a0"/><rect x="28" y="210" width="1" height="1" fill="#a0a0a0"/><rect x="33" y="210" width="1" height="1" fill="#a0a0a0"/><rect x="38" y="210" width="1" height="1" fill="#a0a0a0"/><rect x="43" y="210" width="1" height="1" fill="#a0a0a0"/><rect x="48" y="210" width="1" height="1" fill="#a0a0a0"/><rect x="53" y="210" width="1" height="1" fill="#a0a0a0"/><rect x="58" y="210" width="1" height="1" fill="#a0a0a0"/><rect x="63" y="210" width="1" height="1" fill="#a0a0a0"/><rect x="68" y="210" width="1" height="1" fill="#a0a0a0"/><rect x="73" y="210" width="1" height="1" fill="#a0a0a0"/><rect x="78" y="210" width="1" height="1" fill="#a0a0a0"/><rect x="83" y="210" width="1" height="1" fill="#a0a0a0"/><rect x="88" y="210" width="1" height="1" fill="#a0a0a0"/><rect x="93" y="210" width="1" height="1" fill="#a0a0a0"/><rect x="98" y="210" width="1" height="1" fill="#a0a0a0"/><rect x="103" y="210" width="1" height="1" fill="#a0a0a0"/><rect x="108" y="210" width="1" height="1" fill="#a0a0a0"/><rect x="113" y="210" width="1" height="1" fill="#a0a0a0"/><rect x="118" y="210" width="1" height="1" fill="#a0a0a0"/><rect x="123" y="210" width="1" height="1" fill="#a0a0a0"/><rect x="128" y="210" width="1" height="1" fill="#a0a0a0"/><rect x="133" y="210" width="1" height="1" fill="#a0a0a0"/><rect x="138" y="210" width="1" height="1" fill="#a0a0a0"/><rect x="143" y="210" width="1" height="1" fill="#a0a0a0"/><rect x="148" y="210" width="1" height="1" fill="#a0a0a0"/><rect x="153" y="210" width="1" height="1" fill="#a0a0a0"/><rect x="158" y="210" width="1" height="1" fill="#a0a0a0"/><rect x="163" y="210" width="1" height="1" fill="#a0a0a0"/><rect x="168" y="210" width="1" height="1" fill="#a0a0a0"/><rect x="173" y="210" width="1" height="1" fill="#a0a0a0"/><rect x="178" y="210" width="1" height="1" fill="#a0a0a0"/><rect x="183" y="210" width="1" height="1" fill="#a0a0a0"/><rect x="188" y="210" width="1" height="1" fill="#a0a0a0"/><rect x="193" y="210" width="1" height="1" fill="#a0a0a0"/><rect x="198" y="210" width="1" height="1" fill="#a0a0a0"/><rect x="203" y="210" width="1" height="1" fill="#a0a0a0"/><rect x="208" y="210" width="1" height="1" fill="#a0a0a0"/><rect x="213" y="210" width="1" height="1" fill="#a0a0a0"/><rect x="218" y="210" width="1" height="1" fill="#a0a0a0"/><rect x="223" y="210" width="1" height="1" fill="#a0a0a0"/><rect x="228" y="210" width="1" height="1" fill="#a0a0a0"/><rect x="233" y="210" width="1" height="1" fill="#a0a0a0"/><rect x="238" y="210" width="1" height="1" fill="#a0a0a0"/><rect x="243" y="210" width="1" height="1" fill="#a0a0a0"/><rect x="248" y="210" width="1" height="1" fill="#a0a0a0"/><rect x="253" y="210" width="1" height="1" fill="#a0a0a0"/><rect x="258" y="210" width="1" height="1" fill="#a0a0a0"/><rect x="263" y="210" width="1" height="1" fill="#a0a0a0"/><rect x="268" y="210" width="1" height="1" fill="#a0a0a0"/><rect x="273" y="210" width="1" height="1" fill="#a0a0a0"/><rect x="278" y="210" width="1" height="1" fill="#a0a0a0"/><rect x="283" y="210" width="1" height="1" fill="#a0a0a0"/><rect x="288" y="210" width="1" height="1" fill="#a0a0a0"/><rect x="293" y="210" width="1" height="1" fill="#a0a0a0"/><rect x="298" y="210" width="1" height="1" fill="#a0a0a0"/><rect x="303" y="210" width="1" height="1" fill="#a0a0a0"/><rect x="308" y="210" width="1" height="1" fill="#a0a0a0"/><rect x="313" y="210" width="1" height="1" fill="#a0a0a0"/><rect x="318" y="210" width="1" height="1" fill="#a0a0a0"/><rect x="323" y="210" width="1" height="1" fill="#a0a0a0"/><rect x="328" y="210" width="1" height="1" fill="#a0a0a0"/><rect x="333" y="210" width="1" height="1" fill="#a0a0a0"/><rect x="338" y="210" width="1" height="1" fill="#a0a0a0"/><rect x="343" y="210" width="1" height="1" fill="#a0a0a0"/><rect x="348" y="210" width="1" height="1" fill="#a0a0a0"/><rect x="353" y="210" width="1" height="1" fill="#a0a0a0"/><rect x="358" y="210" width="1" height="1" fill="#a0a0a0"/><rect x="363" y="210" width="1" height="1" fill="#a0a0a0"/><rect x="368" y="210" width="1" height="1" fill="#a0a0a0"/><rect x="373" y="210" width="1" height="1" fill="#a0a0a0"/><rect x="378" y="210" width="1" height="1" fill="#a0a0a0"/><rect x="383" y="210" width="1" height="1" fill="#a0a0a0"/><rect x="388" y="210" width="1" height="1" fill="#a0a0a0"/><rect x="393" y="210" width="1" height="1" fill="#a0a0a0"/><rect x="398" y="210" width="1" height="1" fill="#a0a0a0"/><rect x="403" y="210" width="1" height="1" fill="#a0a0a0"/><rect x="408" y="210" width="1" height="1" fill="#a0a0a0"/><rect x="413" y="210" width="1" height="1" fill="#a0a0a0"/><rect x="418" y="210" width="1" height="1" fill="#a0a0a0"/><rect x="423" y="210" width="1" height="1" fill="#a0a0a0"/><rect x="428" y="210" width="1" height="1" fill="#a0a0a0"/><rect x="433" y="210" width="1" height="1" fill="#a0a0a0"/><rect x="438" y="210" width="1" height="1" fill="#a0a0a0"/><rect x="443" y="210" width="1" height="1" fill="#a0a0a0"/><rect x="448" y="210" width="1" height="1" fill="#a0a0a0"/><rect x="453" y="210" width="1" height="1" fill="#a0a0a0"/><rect x="458" y="210" width="1" height="1" fill="#a0a0a0"/><rect x="463" y="210" width="1" height="1" fill="#a0a0a0"/><rect x="468" y="210" width="1" height="1" fill="#a0a0a0"/><rect x="473" y="210" width="1" height="1" fill="#a0a0a0"/><rect x="478" y="210" width="1" height="1" fill="#a0a0a0"/><rect x="483" y="210" width="1" height="1" fill="#a0a0a0"/><rect x="488" y="210" width="1" height="1" fill="#a0a0a0"/><rect x="493" y="210" width="1" height="1" fill="#a0a0a0"/><rect x="498" y="210" width="1" height="1" fill="#a0a0a0"/><rect x="8" y="240" width="1" height="1" fill="#a0a0a0"/><rect x="13" y="240" width="1" height="1" fill="#a0a0a0"/><rect x="18" y="240" width="1" height="1" fill="#a0a0a0"/><rect x="23" y="240" width="1" height="1" fill="#a0a0a0"/><rect x="28" y="240" width="1" height="1" fill="#a0a0a0"/><rect x="33" y="240" width="1" height="1" fill="#a0a0a0"/><rect x="38" y="240" width="1" height="1" fill="#a0a0a0"/><rect x="43" y="240" width="1" height="1" fill="#a0a0a0"/><rect x="48" y="240" width="1" height="1" fill="#a0a0a0"/><rect x="53" y="240" width="1" height="1" fill="#a0a0a0"/><rect x="58" y="240" width="1" height="1" fill="#a0a0a0"/><rect x="63" y="240" width="1" height="1" fill="#a0a0a0"/><rect x="68" y="240" width="1" height="1" fill="#a0a0a0"/><rect x="73" y="240" width="1" height="1" fill="#a0a0a0"/><rect x="78" y="240" width="1" height="1" fill="#a0a0a0"/><rect x="83" y="240" width="1" height="1" fill="#a0a0a0"/><rect x="88" y="240" width="1" height="1" fill="#a0a0a0"/><rect x="93" y="240" width="1" height="1" fill="#a0a0a0"/><rect x="98" y="240" width="1" height="1" fill="#a0a0a0"/><rect x="103" y="240" width="1" height="1" fill="#a0a0a0"/><rect x="108" y="240" width="1" height="1" fill="#a0a0a0"/><rect x="113" y="240" width="1" height="1" fill="#a0a0a0"/><rect x="118" y="240" width="1" height="1" fill="#a0a0a0"/><rect x="123" y="240" width="1" height="1" fill="#a0a0a0"/><rect x="128" y="240" width="1" height="1" fill="#a0a0a0"/><rect x="133" y="240" width="1" height="1" fill="#a0a0a0"/><rect x="138" y="240" width="1" height="1" fill="#a0a0a0"/><rect x="143" y="240" width="1" height="1" fill="#a0a0a0"/><rect x="148" y="240" width="1" height="1" fill="#a0a0a0"/><rect x="153" y="240" width="1" height="1" fill="#a0a0a0"/><rect x="158" y="240" width="1" height="1" fill="#a0a0a0"/><rect x="163" y="240" width="1" height="1" fill="#a0a0a0"/><rect x="168" y="240" width="1" height="1" fill="#a0a0a0"/><rect x="173" y="240" width="1" height="1" fill="#a0a0a0"/><rect x="178" y="240" width="1" height="1" fill="#a0a0a0"/><rect x="183" y="240" width="1" height="1" fill="#a0a0a0"/><rect x="188" y="240" width="1" height="1" fill="#a0a0a0"/><rect x="193" y="240" width="1" height="1" fill="#a0a0a0"/><rect x="198" y="240" width="1" height="1" fill="#a0a0a0"/><rect x="203" y="240" width="1" height="1" fill="#a0a0a0"/><rect x="208" y="240" width="1" height="1" fill="#a0a0a0"/><rect x="213" y="240" width="1" height="1" fill="#a0a0a0"/><rect x="218" y="240" width="1" height="1" fill="#a0a0a0"/><rect x="223" y="240" width="1" height="1" fill="#a0a0a0"/><rect x="228" y="240" width="1" height="1" fill="#a0a0a0"/><rect x="233" y="240" width="1" height="1" fill="#a0a0a0"/><rect x="238" y="240" width="1" height="1" fill="#a0a0a0"/><rect x="243" y="240" width="1" height="1" fill="#a0a0a0"/><rect x="248" y="240" width="1" height="1" fill="#a0a0a0"/><rect x="253" y="240" width="1" height="1" fill="#a0a0a0"/><rect x="258" y="240" width="1" height="1" fill="#a0a0a0"/><rect x="263" y="240" width="1" height="1" fill="#a0a0a0"/><rect x="268" y="240" width="1" height="1" fill="#a0a0a0"/><rect x="273" y="240" width="1" height="1" fill="#a0a0a0"/><rect x="278" y="240" width="1" height="1" fill="#a0a0a0"/><rect x="283" y="240" width="1" height="1" fill="#a0a0a0"/><rect x="288" y="240" width="1" height="1" fill="#a0a0a0"/><rect x="293" y="240" width="1" height="1" fill="#a0a0a0"/><rect x="298" y="240" width="1" height="1" fill="#a0a0a0"/><rect x="303" y="240" width="1" height="1" fill="#a0a0a0"/><rect x="308" y="240" width="1" height="1" fill="#a0a0a0"/><rect x="313" y="240" width="1" height="1" fill="#a0a0a0"/><rect x="318" y="240" width="1" height="1" fill="#a0a0a0"/><rect x="323" y="240" width="1" height="1" fill="#a0a0a0"/><rect x="328" y="240" width="1" height="1" fill="#a0a0a0"/><rect x="333" y="240" width="1" height="1" fill="#a0a0a0"/><rect x="338" y="240" width="1" height="1" fill="#a0a0a0"/><rect x="343" y="240" width="1" height="1" fill="#a0a0a0"/><rect x="348" y="240" width="1" height="1" fill="#a0a0a0"/><rect x="353" y="240" width="1" height="1" fill="#a0a0a0"/><rect x="358" y="240" width="1" height="1" fill="#a0a0a0"/><rect x="363" y="240" width="1" height="1" fill="#a0a0a0"/><rect x="368" y="240" width="1" height="1" fill="#a0a0a0"/><rect x="373" y="240" width="1" height="1" fill="#a0a0a0"/><rect x="378" y="240" width="1" height="1" fill="#a0a0a0"/><rect x="383" y="240" width="1" height="1" fill="#a0a0a0"/><rect x="388" y="240" width="1" height="1" fill="#a0a0a0"/><rect x="393" y="240" width="1" height="1" fill="#a0a0a0"/><rect x="398" y="240" width="1" height="1" fill="#a0a0a0"/><rect x="403" y="240" width="1" height="1" fill="#a0a0a0"/><rect x="408" y="240" width="1" height="1" fill="#a0a0a0"/><rect x="413" y="240" width="1" height="1" fill="#a0a0a0"/><rect x="418" y="240" width="1" height="1" fill="#a0a0a0"/><rect x="423" y="240" width="1" height="1" fill="#a0a0a0"/><rect x="428" y="240" width="1" height="1" fill="#a0a0a0"/><rect x="433" y="240" width="1" height="1" fill="#a0a0a0"/><rect x="438" y="240" width="1" height="1" fill="#a0a0a0"/><rect x="443" y="240" width="1" height="1" fill="#a0a0a0"/><rect x="448" y="240" width="1" height="1" fill="#a0a0a0"/><rect x="453" y="240" width="1" height="1" fill="#a0a0a0"/><rect x="458" y="240" width="1" height="1" fill="#a0a0a0"/><rect x="463" y="240" width="1" height="1" fill="#a0a0a0"/><rect x="468" y="240" width="1" height="1" fill="#a0a0a0"/><rect x="473" y="240" width="1" height="1" fill="#a0a0a0"/><rect x="478" y="240" width="1" height="1" fill="#a0a0a0"/><rect x="483" y="240" width="1" height="1" fill="#a0a0a0"/><rect x="488" y="240" width="1" height="1" fill="#a0a0a0"/><rect x="493" y="240" width="1" height="1" fill="#a0a0a0"/><rect x="498" y="240" width="1" height="1" fill="#a0a0a0"/><rect x="8" y="270" width="1" height="1" fill="#a0a0a0"/><rect x="13" y="270" width="1" height="1" fill="#a0a0a0"/><rect x="18" y="270" width="1" height="1" fill="#a0a0a0"/><rect x="23" y="270" width="1" height="1" fill="#a0a0a0"/><rect x="28" y="270" width="1" height="1" fill="#a0a0a0"/><rect x="33" y="270" width="1" height="1" fill="#a0a0a0"/><rect x="38" y="270" width="1" height="1" fill="#a0a0a0"/><rect x="43" y="270" width="1" height="1" fill="#a0a0a0"/><rect x="48" y="270" width="1" height="1" fill="#a0a0a0"/><rect x="53" y="270" width="1" height="1" fill="#a0a0a0"/><rect x="58" y="270" width="1" height="1" fill="#a0a0a0"/><rect x="63" y="270" width="1" height="1" fill="#a0a0a0"/><rect x="68" y="270" width="1" height="1" fill="#a0a0a0"/><rect x="73" y="270" width="1" height="1" fill="#a0a0a0"/><rect x="78" y="270" width="1" height="1" fill="#a0a0a0"/><rect x="83" y="270" width="1" height="1" fill="#a0a0a0"/><rect x="88" y="270" width="1" height="1" fill="#a0a0a0"/><rect x="93" y="270" width="1" height="1" fill="#a0a0a0"/><rect x="98" y="270" width="1" height="1" fill="#a0a0a0"/><rect x="103" y="270" width="1" height="1" fill="#a0a0a0"/><rect x="108" y="270" width="1" height="1" fill="#a0a0a0"/><rect x="113" y="270" width="1" height="1" fill="#a0a0a0"/><rect x="118" y="270" width="1" height="1" fill="#a0a0a0"/><rect x="123" y="270" width="1" height="1" fill="#a0a0a0"/><rect x="128" y="270" width="1" height="1" fill="#a0a0a0"/><rect x="133" y="270" width="1" height="1" fill="#a0a0a0"/><rect x="138" y="270" width="1" height="1" fill="#a0a0a0"/><rect x="143" y="270" width="1" height="1" fill="#a0a0a0"/><rect x="148" y="270" width="1" height="1" fill="#a0a0a0"/><rect x="153" y="270" width="1" height="1" fill="#a0a0a0"/><rect x="158" y="270" width="1" height="1" fill="#a0a0a0"/><rect x="163" y="270" width="1" height="1" fill="#a0a0a0"/><rect x="168" y="270" width="1" height="1" fill="#a0a0a0"/><rect x="173" y="270" width="1" height="1" fill="#a0a0a0"/><rect x="178" y="270" width="1" height="1" fill="#a0a0a0"/><rect x="183" y="270" width="1" height="1" fill="#a0a0a0"/><rect x="188" y="270" width="1" height="1" fill="#a0a0a0"/><rect x="193" y="270" width="1" height="1" fill="#a0a0a0"/><rect x="198" y="270" width="1" height="1" fill="#a0a0a0"/><rect x="203" y="270" width="1" height="1" fill="#a0a0a0"/><rect x="208" y="270" width="1" height="1" fill="#a0a0a0"/><rect x="213" y="270" width="1" height="1" fill="#a0a0a0"/><rect x="218" y="270" width="1" height="1" fill="#a0a0a0"/><rect x="223" y="270" width="1" height="1" fill="#a0a0a0"/><rect x="228" y="270" width="1" height="1" fill="#a0a0a0"/><rect x="233" y="270" width="1" height="1" fill="#a0a0a0"/><rect x="238" y="270" width="1" height="1" fill="#a0a0a0"/><rect x="243" y="270" width="1" height="1" fill="#a0a0a0"/><rect x="248" y="270" width="1" height="1" fill="#a0a0a0"/><rect x="253" y="270" width="1" height="1" fill="#a0a0a0"/><rect x="258" y="270" width="1" height="1" fill="#a0a0a0"/><rect x="263" y="270" width="1" height="1" fill="#a0a0a0"/><rect x="268" y="270" width="1" height="1" fill="#a0a0a0"/><rect x="273" y="270" width="1" height="1" fill="#a0a0a0"/><rect x="278" y="270" width="1" height="1" fill="#a0a0a0"/><rect x="283" y="270" width="1" height="1" fill="#a0a0a0"/><rect x="288" y="270" width="1" height="1" fill="#a0a0a0"/><rect x="293" y="270" width="1" height="1" fill="#a0a0a0"/><rect x="298" y="270" width="1" height="1" fill="#a0a0a0"/><rect x="303" y="270" width="1" height="1" fill="#a0a0a0"/><rect x="308" y="270" width="1" height="1" fill="#a0a0a0"/><rect x="313" y="270" width="1" height="1" fill="#a0a0a0"/><rect x="318" y="270" width="1" height="1" fill="#a0a0a0"/><rect x="323" y="270" width="1" height="1" fill="#a0a0a0"/><rect x="328" y="270" width="1" height="1" fill="#a0a0a0"/><rect x="333" y="270" width="1" height="1" fill="#a0a0a0"/><rect x="338" y="270" width="1" height="1" fill="#a0a0a0"/><rect x="343" y="270" width="1" height="1" fill="#a0a0a0"/><rect x="348" y="270" width="1" height="1" fill="#a0a0a0"/><rect x="353" y="270" width="1" height="1" fill="#a0a0a0"/><rect x="358" y="270" width="1" height="1" fill="#a0a0a0"/><rect x="363" y="270" width="1" height="1" fill="#a0a0a0"/><rect x="368" y="270" width="1" height="1" fill="#a0a0a0"/><rect x="373" y="270" width="1" height="1" fill="#a0a0a0"/><rect x="378" y="270" width="1" height="1" fill="#a0a0a0"/><rect x="383" y="270" width="1" height="1" fill="#a0a0a0"/><rect x="388" y="270" width="1" height="1" fill="#a0a0a0"/><rect x="393" y="270" width="1" height="1" fill="#a0a0a0"/><rect x="398" y="270" width="1" height="1" fill="#a0a0a0"/><rect x="403" y="270" width="1" height="1" fill="#a0a0a0"/><rect x="408" y="270" width="1" height="1" fill="#a0a0a0"/><rect x="413" y="270" width="1" height="1" fill="#a0a0a0"/><rect x="418" y="270" width="1" height="1" fill="#a0a0a0"/><rect x="423" y="270" width="1" height="1" fill="#a0a0a0"/><rect x="428" y="270" width="1" height="1" fill="#a0a0a0"/><rect x="433" y="270" width="1" height="1" fill="#a0a0a0"/><rect x="438" y="270" width="1" height="1" fill="#a0a0a0"/><rect x="443" y="270" width="1" height="1" fill="#a0a0a0"/><rect x="448" y="270" width="1" height="1" fill="#a0a0a0"/><rect x="453" y="270" width="1" height="1" fill="#a0a0a0"/><rect x="458" y="270" width="1" height="1" fill="#a0a0a0"/><rect x="463" y="270" width="1" height="1" fill="#a0a0a0"/><rect x="468" y="270" width="1" height="1" fill="#a0a0a0"/><rect x="473" y="270" width="1" height="1" fill="#a0a0a0"/><rect x="478" y="270" width="1" height="1" fill="#a0a0a0"/><rect x="483" y="270" width="1" height="1" fill="#a0a0a0"/><rect x="488" y="270" width="1" height="1" fill="#a0a0a0"/><rect x="493" y="270" width="1" height="1" fill="#a0a0a0"/><rect x="498" y="270" width="1" height="1" fill="#a0a0a0"/><rect x="128" y="185" width="1" height="1" fill="#a0a0a0"/><rect x="128" y="190" width="1" height="1" fill="#a0a0a0"/><rect x="128" y="195" width="1" height="1" fill="#a0a0a0"/><rect x="128" y="200" width="1" height="1" fill="#a0a0a0"/><rect x="128" y="205" width="1" height="1" fill="#a0a0a0"/><rect x="128" y="210" width="1" height="1" fill="#a0a0a0"/><rect x="128" y="215" width="1" height="1" fill="#a0a0a0"/><rect x="128" y="220" width="1" height="1" fill="#a0a0a0"/><rect x="128" y="225" width="1" height="1" fill="#a0a0a0"/><rect x="128" y="230" width="1" height="1" fill="#a0a0a0"/><rect x="128" y="235" width="1" height="1" fill="#a0a0a0"/><rect x="128" y="240" width="1" height="1" fill="#a0a0a0"/><rect x="128" y="245" width="1" height="1" fill="#a0a0a0"/><rect x="128" y="250" width="1" height="1" fill="#a0a0a0"/><rect x="128" y="255" width="1" height="1" fill="#a0a0a0"/><rect x="128" y="260" width="1" height="1" fill="#a0a0a0"/><rect x="128" y="265" width="1" height="1" fill="#a0a0a0"/><rect x="128" y="270" width="1" height="1" fill="#a0a0a0"/><rect x="128" y="275" width="1" height="1" fill="#a0a0a0"/><rect x="128" y="280" width="1" height="1" fill="#a0a0a0"/><rect x="128" y="285" width="1" height="1" fill="#a0a0a0"/><rect x="128" y="290" width="1" height="1" fill="#a0a0a0"/><rect x="128" y="295" width="1" height="1" fill="#a0a0a0"/><rect x="253" y="185" width="1" height="1" fill="#a0a0a0"/><rect x="253" y="190" width="1" height="1" fill="#a0a0a0"/><rect x="253" y="195" width="1" height="1" fill="#a0a0a0"/><rect x="253" y="200" width="1" height="1" fill="#a0a0a0"/><rect x="253" y="205" width="1" height="1" fill="#a0a0a0"/><rect x="253" y="210" width="1" height="1" fill="#a0a0a0"/><rect x="253" y="215" width="1" height="1" fill="#a0a0a0"/><rect x="253" y="220" width="1" height="1" fill="#a0a0a0"/><rect x="253" y="225" width="1" height="1" fill="#a0a0a0"/><rect x="253" y="230" width="1" height="1" fill="#a0a0a0"/><rect x="253" y="235" width="1" height="1" fill="#a0a0a0"/><rect x="253" y="240" width="1" height="1" fill="#a0a0a0"/><rect x="253" y="245" width="1" height="1" fill="#a0a0a0"/><rect x="253" y="250" width="1" height="1" fill="#a0a0a0"/><rect x="253" y="255" width="1" height="1" fill="#a0a0a0"/><rect x="253" y="260" width="1" height="1" fill="#a0a0a0"/><rect x="253" y="265" width="1" height="1" fill="#a0a0a0"/><rect x="253" y="270" width="1" height="1" fill="#a0a0a0"/><rect x="253" y="275" width="1" height="1" fill="#a0a0a0"/><rect x="253" y="280" width="1" height="1" fill="#a0a0a0"/><rect x="253" y="285" width="1" height="1" fill="#a0a0a0"/><rect x="253" y="290" width="1" height="1" fill="#a0a0a0"/><rect x="253" y="295" width="1" height="1" fill="#a0a0a0"/><rect x="378" y="185" width="1" height="1" fill="#a0a0a0"/><rect x="378" y="190" width="1" height="1" fill="#a0a0a0"/><rect x="378" y="195" width="1" height="1" fill="#a0a0a0"/><rect x="378" y="200" width="1" height="1" fill="#a0a0a0"/><rect x="378" y="205" width="1" height="1" fill="#a0a0a0"/><rect x="378" y="210" width="1" height="1" fill="#a0a0a0"/><rect x="378" y="215" width="1" height="1" fill="#a0a0a0"/><rect x="378" y="220" width="1" height="1" fill="#a0a0a0"/><rect x="378" y="225" width="1" height="1" fill="#a0a0a0"/><rect x="378" y="230" width="1" height="1" fill="#a0a0a0"/><rect x="378" y="235" width="1" height="1" fill="#a0a0a0"/><rect x="378" y="240" width="1" height="1" fill="#a0a0a0"/><rect x="378" y="245" width="1" height="1" fill="#a0a0a0"/><rect x="378" y="250" width="1" height="1" fill="#a0a0a0"/><rect x="378" y="255" width="1" height="1" fill="#a0a0a0"/><rect x="378" y="260" width="1" height="1" fill="#a0a0a0"/><rect x="378" y="265" width="1" height="1" fill="#a0a0a0"/><rect x="378" y="270" width="1" height="1" fill="#a0a0a0"/><rect x="378" y="275" width="1" height="1" fill="#a0a0a0"/><rect x="378" y="280" width="1" height="1" fill="#a0a0a0"/><rect x="378" y="285" width="1" height="1" fill="#a0a0a0"/><rect x="378" y="290" width="1" height="1" fill="#a0a0a0"/><rect x="378" y="295" width="1" height="1" fill="#a0a0a0"/><rect x="3" y="180" width="501" height="1" fill="#b0b0b0"/><rect x="3" y="300" width="501" height="1" fill="#b0b0b0"/><rect x="3" y="180" width="1" height="121" fill="#b0b0b0"/><rect x="503" y="180" width="1" height="121" fill="#b0b0b0"/><rect x="3" y="181" width="1" height="2" fill="#b0b0b0"/><rect x="3" y="298" width="1" height="2" fill="#b0b0b0"/><rect x="28" y="181" width="1" height="2" fill="#b0b0b0"/><rect x="28" y="298" width="1" height="2" fill="#b0b0b0"/><rect x="53" y="181" width="1" height="2" fill="#b0b0b0"/><rect x="53" y="298" width="1" height="2" fill="#b0b0b0"/><rect x="78" y="181" width="1" height="2" fill="#b0b0b0"/><rect x="78" y="298" width="1" height="2" fill="#b0b0b0"/><rect x="103" y="181" width="1" height="2" fill="#b0b0b0"/><rect x="103" y="298" width="1" height="2" fill="#b0b0b0"/><rect x="128" y="181" width="1" height="5" fill="#b0b0b0"/><rect x="128" y="295" width="1" height="5" fill="#b0b0b0"/><rect x="153" y="181" width="1" height="2" fill="#b0b0b0"/><rect x="153" y="298" width="1" height="2" fill="#b0b0b0"/><rect x="178" y="181" width="1" height="2" fill="#b0b0b0"/><rect x="178" y="298" width="1" height="2" fill="#b0b0b0"/><rect x="203" y="181" width="1" height="2" fill="#b0b0b0"/><rect x="203" y="298" width="1" height="2" fill="#b0b0b0"/><rect x="228" y="181" width="1" height="2" fill="#b0b0b0"/><rect x="228" y="298" width="1" height="2" fill="#b0b0b0"/><rect x="253" y="181" width="1" height="5" fill="#b0b0b0"/><rect x="253" y="295" width="1" height="5" fill="#b0b0b0"/><rect x="278" y="181" width="1" height="2" fill="#b0b0b0"/><rect x="278" y="298" width="1" height="2" fill="#b0b0b0"/><rect x="303" y="181" width="1" height="2" fill="#b0b0b0"/><rect x="303" y="298" width="1" height="2" fill="#b0b0b0"/><rect x="328" y="181" width="1" height="2" fill="#b0b0b0"/><rect x="328" y="298" width="1" height="2" fill="#b0b0b0"/><rect x="353" y="181" width="1" height="2" fill="#b0b0b0"/><rect x="353" y="298" width="1" height="2" fill="#b0b0b0"/><rect x="378" y="181" width="1" height="5" fill="#b0b0b0"/><rect x="378" y="295" width="1" height="5" fill="#b0b0b0"/><rect x="403" y="181" width="1" height="2" fill="#b0b0b0"/><rect x="403" y="298" width="1" height="2" fill="#b0b0b0"/><rect x="428" y="181" width="1" height="2" fill="#b0b0b0"/><rect x="428" y="298" width="1" height="2" fill="#b0b0b0"/><rect x="453" y="181" width="1" height="2" fill="#b0b0b0"/><rect x="453" y="298" width="1" height="2" fill="#b0b0b0"/><rect x="478" y="181" width="1" height="2" fill="#b0b0b0"/><rect x="478" y="298" width="1" height="2" fill="#b0b0b0"/><rect x="4" y="186" width="2" height="1" fill="#b0b0b0"/><rect x="501" y="186" width="2" height="1" fill="#b0b0b0"/><rect x="4" y="192" width="2" height="1" fill="#b0b0b0"/><rect x="501" y="192" width="2" height="1" fill="#b0b0b0"/><rect x="4" y="198" width="2" height="1" fill="#b0b0b0"/><rect x="501" y="198" width="2" height="1" fill="#b0b0b0"/><rect x="4" y="204" width="2" height="1" fill="#b0b0b0"/><rect x="501" y="204" width="2" height="1" fill="#b0b0b0"/><rect x="4" y="210" width="5" height="1" fill="#b0b0b0"/><rect x="498" y="210" width="5" height="1" fill="#b0b0b0"/><rect x="4" y="216" width="2" height="1" fill="#b0b0b0"/><rect x="501" y="216" width="2" height="1" fill="#b0b0b0"/><rect x="4" y="222" width="2" height="1" fill="#b0b0b0"/><rect x="501" y="222" width="2" height="1" fill="#b0b0b0"/><rect x="4" y="228" width="2" height="1" fill="#b0b0b0"/><rect x="501" y="228" width="2" height="1" fill="#b0b0b0"/><rect x="4" y="234" width="2" height="1" fill="#b0b0b0"/><rect x="501" y="234" width="2" height="1" fill="#b0b0b0"/><rect x="4" y="240" width="5" height="1" fill="#b0b0b0"/><rect x="498" y="240" width="5" height="1" fill="#b0b0b0"/><rect x="4" y="246" width="2" height="1" fill="#b0b0b0"/><rect x="501" y="246" width="2" height="1" fill="#b0b0b0"/><rect x="4" y="252" width="2" height="1" fill="#b0b0b0"/><rect x="501" y="252" width="2" height="1" fill="#b0b0b0"/><rect x="4" y="258" width="2" height="1" fill="#b0b0b0"/><rect x="501" y="258" width="2" height="1" fill="#b0b0b0"/><rect x="4" y="264" width="2" height="1" fill="#b0b0b0"/><rect x="501" y="264" width="2" height="1" fill="#b0b0b0"/><rect x="4" y="270" width="5" height="1" fill="#b0b0b0"/><rect x="498" y="270" width="5" height="1" fill="#b0b0b0"/><rect x="4" y="276" width="2" height="1" fill="#b0b0b0"/><rect x="501" y="276" width="2" height="1" fill="#b0b0b0"/><rect x="4" y="282" width="2" height="1" fill="#b0b0b0"/><rect x="501" y="282" width="2" height="1" fill="#b0b0b0"/><rect x="4" y="288" width="2" height="1" fill="#b0b0b0"/><rect x="501" y="288" width="2" height="1" fill="#b0b0b0"/><rect x="4" y="294" width="2" height="1" fill="#b0b0b0"/><rect x="501" y="294" width="2" height="1" fill="#b0b0b0"/><path d="M3.2,262.5 L6.4,262.1 L13.9,260.8 L29,265.7 L45,258.2 L52.6,257.4 L60,257.4 L74,260.6 L88,262.5 L90,263.1 L104.5,252.9 L109.4,250.9 L121.2,247.1 L128.8,248.3 L136.3,249.8 L151.3,272.8 L169.3,261.0 L184.3,255.6 L197.2,252.9 L227.2,262.1 L244.4,246.4 L258.3,237.6 L265,237.6 L266,238.6 L274.4,238.8 L287.3,248.1 L304.5,261.0 L319.5,255.6 L334.4,252.1 L348.8,254.8 L365.4,267.6 L379.7,264.9 L395.2,248.8 L400.7,247.7 L410.6,246.4 L422.8,251.4 L440.5,260.2 L457,260.2 L471.4,255.1 L484.7,257.9 L503.4,265.4" stroke="#ffff00" stroke-width="1" fill="none"/><g style="mix-blend-mode:lighten"><rect x="252" y="190" width="3" height="100" fill="#a80000"/></g><polygon points="249,181 258,181 253.5,196" fill="#fff" shape-rendering="auto"/><polygon points="249,300 258,300 253.5,285" fill="#fff" shape-rendering="auto"/><text transform="translate(510,191) scale(0.92,1)" font-size="12" fill="#00ff00" text-anchor="start" font-weight="normal">dB</text><text transform="translate(510,216) scale(0.92,1)" font-size="12" fill="#00ff00" text-anchor="start" font-weight="normal">-40</text><text transform="translate(510,246) scale(0.92,1)" font-size="12" fill="#00ff00" text-anchor="start" font-weight="normal">-80</text><text transform="translate(510,276) scale(0.92,1)" font-size="12" fill="#00ff00" text-anchor="start" font-weight="normal">-120</text><text transform="translate(510,306) scale(0.92,1)" font-size="12" fill="#00ff00" text-anchor="start" font-weight="normal">-160</text><text transform="translate(3,316) scale(0.92,1)" font-size="12" fill="#00ff00" text-anchor="start" font-weight="normal">kHz</text><text transform="translate(124,316) scale(0.92,1)" font-size="12" fill="#00ff00" text-anchor="middle" font-weight="normal">1394.75</text><text transform="translate(249,316) scale(0.92,1)" font-size="12" fill="#00ff00" text-anchor="middle" font-weight="normal">1395.00</text><text transform="translate(374,316) scale(0.92,1)" font-size="12" fill="#00ff00" text-anchor="middle" font-weight="normal">1395.25</text><rect x="544" y="179" width="23" height="23" fill="#adadad"/><rect x="545" y="180" width="21" height="21" fill="#e1e1e1"/><text transform="translate(555.5,195.0) scale(0.95,1)" font-size="12" fill="#000" text-anchor="middle" font-weight="normal">Avg</text><rect x="544" y="211" width="23" height="23" fill="#adadad"/><rect x="545" y="212" width="21" height="21" fill="#e1e1e1"/><text transform="translate(555.5,227.0) scale(0.95,1)" font-size="12" fill="#000" text-anchor="middle" font-weight="normal">+</text><rect x="544" y="243" width="23" height="23" fill="#adadad"/><rect x="545" y="244" width="21" height="21" fill="#e1e1e1"/><text transform="translate(555.5,259.0) scale(0.95,1)" font-size="12" fill="#000" text-anchor="middle" font-weight="normal">-</text><rect x="1" y="330" width="272" height="1" fill="#a0a0a0"/><rect x="1" y="330" width="1" height="88" fill="#a0a0a0"/><rect x="1" y="418" width="273" height="1" fill="#ffffff"/><rect x="273" y="330" width="1" height="89" fill="#ffffff"/><text x="13" y="347" font-size="11" fill="#000" text-anchor="start" font-weight="normal">HW tuning</text><text x="108" y="347" font-size="11" fill="#000" text-anchor="start" font-weight="normal">step:</text><text x="159" y="347" font-size="11" fill="#000" text-anchor="middle" font-weight="normal">9</text><text x="164" y="347" font-size="11" fill="#000" text-anchor="middle" font-weight="normal">.</text><text x="169.5" y="347" font-size="11" fill="#000" text-anchor="middle" font-weight="normal">0</text><text x="178.5" y="347" font-size="11" fill="#000" text-anchor="middle" font-weight="normal">0</text><text x="188.6" y="347" font-size="11" fill="#000" text-anchor="start" font-weight="normal">kHz</text><text transform="translate(35.5,383) scale(1.07,1)" font-size="38" font-weight="bold" text-anchor="middle" fill="#000" stroke="#f0f0f0" stroke-width="0.45">0</text><text transform="translate(64.5,383) scale(1.07,1)" font-size="38" font-weight="bold" text-anchor="middle" fill="#000" stroke="#f0f0f0" stroke-width="0.45">0</text><text transform="translate(87.5,383) scale(1.07,1)" font-size="38" font-weight="bold" text-anchor="middle" fill="#000" stroke="#f0f0f0" stroke-width="0.45">0</text><text transform="translate(141.5,383) scale(1.07,1)" font-size="38" font-weight="bold" text-anchor="middle" fill="#000" stroke="#f0f0f0" stroke-width="0.45">3</text><text transform="translate(164.5,383) scale(1.07,1)" font-size="38" font-weight="bold" text-anchor="middle" fill="#000" stroke="#f0f0f0" stroke-width="0.45">9</text><text transform="translate(188.5,383) scale(1.07,1)" font-size="38" font-weight="bold" text-anchor="middle" fill="#000" stroke="#f0f0f0" stroke-width="0.45">5</text><path d="M103,362 L110.5,356 L115,356 L115,383 L110,383 L110,364.5 L104.5,367 L103,367 Z" fill="#000" shape-rendering="auto"/><rect x="47" y="380" width="5" height="5" fill="#000"/><rect x="123" y="380" width="5" height="5" fill="#000"/><rect x="199" y="380" width="5" height="5" fill="#000"/><text transform="translate(214,383) scale(1.04,1)" font-size="29.5" font-weight="bold" text-anchor="middle" fill="#000" stroke="#f0f0f0" stroke-width="0.45">0</text><text transform="translate(232,383) scale(1.04,1)" font-size="29.5" font-weight="bold" text-anchor="middle" fill="#000" stroke="#f0f0f0" stroke-width="0.45">0</text><text transform="translate(250,383) scale(1.04,1)" font-size="29.5" font-weight="bold" text-anchor="middle" fill="#000" stroke="#f0f0f0" stroke-width="0.45">0</text><text x="20" y="394" font-size="11" fill="#000" text-anchor="start" font-weight="normal">GHz</text><text x="96.5" y="394" font-size="11" fill="#000" text-anchor="start" font-weight="normal">MHz</text><text x="177" y="394" font-size="11" fill="#000" text-anchor="start" font-weight="normal">kHz</text><text x="244.5" y="394" font-size="11" fill="#000" text-anchor="start" font-weight="normal">Hz</text><text x="6" y="412" font-size="11" fill="#000" text-anchor="start" font-weight="normal">Hfreq:</text><text x="41" y="412" font-size="11" fill="#000" text-anchor="middle" font-weight="normal">0</text><text x="46.5" y="412" font-size="11" fill="#000" text-anchor="middle" font-weight="normal">.</text><text x="54" y="412" font-size="11" fill="#000" text-anchor="middle" font-weight="normal">0</text><text x="63" y="412" font-size="11" fill="#000" text-anchor="middle" font-weight="normal">0</text><text x="71.5" y="412" font-size="11" fill="#000" text-anchor="middle" font-weight="normal">1</text><text x="78" y="412" font-size="11" fill="#000" text-anchor="middle" font-weight="normal">.</text><text x="84.5" y="412" font-size="11" fill="#000" text-anchor="middle" font-weight="normal">4</text><text x="93" y="412" font-size="11" fill="#000" text-anchor="middle" font-weight="normal">3</text><text x="102.5" y="412" font-size="11" fill="#000" text-anchor="middle" font-weight="normal">4</text><text x="109.5" y="412" font-size="11" fill="#000" text-anchor="middle" font-weight="normal">.</text><text x="116" y="412" font-size="11" fill="#000" text-anchor="middle" font-weight="normal">6</text><text x="125" y="412" font-size="11" fill="#000" text-anchor="middle" font-weight="normal">5</text><text x="134.5" y="412" font-size="11" fill="#000" text-anchor="middle" font-weight="normal">2</text><text x="151.5" y="412" font-size="11" fill="#000" text-anchor="start" font-weight="normal">Sfreq:</text><rect x="189" y="407" width="5" height="1" fill="#000"/><text x="198.5" y="412" font-size="11" fill="#000" text-anchor="middle" font-weight="normal">0</text><text x="206.5" y="412" font-size="11" fill="#000" text-anchor="middle" font-weight="normal">3</text><text x="214" y="412" font-size="11" fill="#000" text-anchor="middle" font-weight="normal">9</text><text x="220.5" y="412" font-size="11" fill="#000" text-anchor="middle" font-weight="normal">.</text><text x="226.3" y="412" font-size="11" fill="#000" text-anchor="middle" font-weight="normal">6</text><text x="234.6" y="412" font-size="11" fill="#000" text-anchor="middle" font-weight="normal">5</text><text x="243" y="412" font-size="11" fill="#000" text-anchor="middle" font-weight="normal">2</text><rect x="1" y="426" width="272" height="1" fill="#a0a0a0"/><rect x="1" y="426" width="1" height="64" fill="#a0a0a0"/><rect x="1" y="490" width="273" height="1" fill="#ffffff"/><rect x="273" y="426" width="1" height="65" fill="#ffffff"/><text x="17" y="441" font-size="10.6" fill="#000" text-anchor="start" font-weight="normal">Signal Strength dBFS</text><rect x="17" y="446" width="107" height="15" fill="#000"/><rect x="17" y="463" width="241" height="1" fill="#000"/><rect x="17" y="463" width="1" height="5" fill="#000"/><rect x="37" y="463" width="1" height="5" fill="#000"/><rect x="57" y="463" width="1" height="5" fill="#000"/><rect x="77" y="463" width="1" height="5" fill="#000"/><rect x="97" y="463" width="1" height="5" fill="#000"/><rect x="117" y="463" width="1" height="5" fill="#000"/><rect x="137" y="463" width="1" height="5" fill="#000"/><rect x="157" y="463" width="1" height="5" fill="#000"/><rect x="177" y="463" width="1" height="5" fill="#000"/><rect x="197" y="463" width="1" height="5" fill="#000"/><rect x="217" y="463" width="1" height="5" fill="#000"/><rect x="237" y="463" width="1" height="5" fill="#000"/><rect x="257" y="463" width="1" height="5" fill="#000"/><text x="56" y="478" font-size="11" fill="#000" text-anchor="middle" font-weight="normal">-100</text><text x="96" y="478" font-size="11" fill="#000" text-anchor="middle" font-weight="normal">-80</text><text x="136" y="478" font-size="11" fill="#000" text-anchor="middle" font-weight="normal">-60</text><text x="176" y="478" font-size="11" fill="#000" text-anchor="middle" font-weight="normal">-40</text><text x="216" y="478" font-size="11" fill="#000" text-anchor="middle" font-weight="normal">-20</text><text x="256.5" y="478" font-size="11" fill="#000" text-anchor="middle" font-weight="normal">0</text><rect x="281" y="330" width="336" height="1" fill="#a0a0a0"/><rect x="281" y="330" width="1" height="112" fill="#a0a0a0"/><rect x="281" y="442" width="337" height="1" fill="#ffffff"/><rect x="617" y="330" width="1" height="113" fill="#ffffff"/><rect x="290" y="339" width="103" height="31" fill="#0078d7"/><rect x="292" y="341" width="99" height="27" fill="#e1e1e1"/><text transform="translate(341.5,359) scale(0.95,1)" font-size="12" fill="#000" text-anchor="middle" font-weight="normal">Up</text><rect x="290" y="371" width="31" height="31" fill="#adadad"/><rect x="291" y="372" width="29" height="29" fill="#e1e1e1"/><text transform="translate(305.5,391.0) scale(0.95,1)" font-size="12" fill="#000" text-anchor="middle" font-weight="normal"></text><rect x="322" y="371" width="39" height="31" fill="#adadad"/><rect x="323" y="372" width="37" height="29" fill="#e1e1e1"/><text transform="translate(341.5,391.0) scale(0.95,1)" font-size="12" fill="#000" text-anchor="middle" font-weight="normal">Align</text><rect x="362" y="371" width="31" height="31" fill="#adadad"/><rect x="363" y="372" width="29" height="29" fill="#e1e1e1"/><text transform="translate(377.5,391.0) scale(0.95,1)" font-size="12" fill="#000" text-anchor="middle" font-weight="normal"></text><rect x="306" y="384" width="1" height="1" fill="#000"/><rect x="305" y="385" width="1" height="1" fill="#000"/><rect x="304" y="386" width="1" height="1" fill="#000"/><rect x="303" y="387" width="1" height="1" fill="#000"/><rect x="304" y="388" width="1" height="1" fill="#000"/><rect x="305" y="389" width="1" height="1" fill="#000"/><rect x="306" y="390" width="1" height="1" fill="#000"/><rect x="375" y="384" width="1" height="1" fill="#000"/><rect x="376" y="385" width="1" height="1" fill="#000"/><rect x="377" y="386" width="1" height="1" fill="#000"/><rect x="378" y="387" width="1" height="1" fill="#000"/><rect x="377" y="388" width="1" height="1" fill="#000"/><rect x="376" y="389" width="1" height="1" fill="#000"/><rect x="375" y="390" width="1" height="1" fill="#000"/><rect x="290" y="403" width="103" height="31" fill="#adadad"/><rect x="291" y="404" width="101" height="29" fill="#e1e1e1"/><text transform="translate(341.5,423.0) scale(0.95,1)" font-size="12" fill="#000" text-anchor="middle" font-weight="normal">Down</text><rect x="402" y="339" width="39" height="23" fill="#adadad"/><rect x="403" y="340" width="37" height="21" fill="#e1e1e1"/><text transform="translate(421.5,355.0) scale(0.95,1)" font-size="12" fill="#000" text-anchor="middle" font-weight="bold">Htun</text><rect x="442" y="339" width="39" height="23" fill="#adadad"/><rect x="443" y="340" width="37" height="21" fill="#e1e1e1"/><text transform="translate(461.5,355.0) scale(0.95,1)" font-size="12" fill="#000" text-anchor="middle" font-weight="normal">Stun</text><rect x="402" y="363" width="39" height="23" fill="#adadad"/><rect x="403" y="364" width="37" height="21" fill="#e1e1e1"/><text transform="translate(421.5,379.0) scale(0.95,1)" font-size="12" fill="#000" text-anchor="middle" font-weight="normal">Mirror</text><rect x="442" y="363" width="39" height="23" fill="#adadad"/><rect x="443" y="364" width="37" height="21" fill="#e1e1e1"/><text transform="translate(461.5,379.0) scale(0.95,1)" font-size="12" fill="#000" text-anchor="middle" font-weight="normal">Srch</text><rect x="402" y="387" width="39" height="23" fill="#adadad"/><rect x="403" y="388" width="37" height="21" fill="#e1e1e1"/><text transform="translate(421.5,403.0) scale(0.95,1)" font-size="12" fill="#000" text-anchor="middle" font-weight="normal">Shift</text><rect x="442" y="387" width="39" height="23" fill="#adadad"/><rect x="443" y="388" width="37" height="21" fill="#e1e1e1"/><text transform="translate(461.5,403.0) scale(0.95,1)" font-size="12" fill="#000" text-anchor="middle" font-weight="normal">Auto</text><rect x="402" y="411" width="39" height="23" fill="#adadad"/><rect x="403" y="412" width="37" height="21" fill="#e1e1e1"/><text transform="translate(421.5,427.0) scale(0.95,1)" font-size="12" fill="#000" text-anchor="middle" font-weight="normal">Pre</text><rect x="442" y="411" width="39" height="23" fill="#adadad"/><rect x="443" y="412" width="37" height="21" fill="#e1e1e1"/><text transform="translate(461.5,427.0) scale(0.95,1)" font-size="12" fill="#000" text-anchor="middle" font-weight="normal">Mid</text><rect x="490" y="339" width="23" height="23" fill="#adadad"/><rect x="491" y="340" width="21" height="21" fill="#e1e1e1"/><text transform="translate(501.5,355.0) scale(0.95,1)" font-size="12" fill="#000" text-anchor="middle" font-weight="normal">7</text><rect x="514" y="339" width="23" height="23" fill="#adadad"/><rect x="515" y="340" width="21" height="21" fill="#e1e1e1"/><text transform="translate(525.5,355.0) scale(0.95,1)" font-size="12" fill="#000" text-anchor="middle" font-weight="normal">8</text><rect x="538" y="339" width="23" height="23" fill="#adadad"/><rect x="539" y="340" width="21" height="21" fill="#e1e1e1"/><text transform="translate(549.5,355.0) scale(0.95,1)" font-size="12" fill="#000" text-anchor="middle" font-weight="normal">9</text><rect x="562" y="339" width="47" height="23" fill="#adadad"/><rect x="563" y="340" width="45" height="21" fill="#e1e1e1"/><text transform="translate(585.5,355.0) scale(0.95,1)" font-size="12" fill="#000" text-anchor="middle" font-weight="normal">MHz</text><rect x="490" y="363" width="23" height="23" fill="#adadad"/><rect x="491" y="364" width="21" height="21" fill="#e1e1e1"/><text transform="translate(501.5,379.0) scale(0.95,1)" font-size="12" fill="#000" text-anchor="middle" font-weight="normal">4</text><rect x="514" y="363" width="23" height="23" fill="#adadad"/><rect x="515" y="364" width="21" height="21" fill="#e1e1e1"/><text transform="translate(525.5,379.0) scale(0.95,1)" font-size="12" fill="#000" text-anchor="middle" font-weight="normal">5</text><rect x="538" y="363" width="23" height="23" fill="#adadad"/><rect x="539" y="364" width="21" height="21" fill="#e1e1e1"/><text transform="translate(549.5,379.0) scale(0.95,1)" font-size="12" fill="#000" text-anchor="middle" font-weight="normal">6</text><rect x="562" y="363" width="47" height="23" fill="#adadad"/><rect x="563" y="364" width="45" height="21" fill="#e1e1e1"/><text transform="translate(585.5,379.0) scale(0.95,1)" font-size="12" fill="#000" text-anchor="middle" font-weight="normal">kHz</text><rect x="490" y="387" width="23" height="23" fill="#adadad"/><rect x="491" y="388" width="21" height="21" fill="#e1e1e1"/><text transform="translate(501.5,403.0) scale(0.95,1)" font-size="12" fill="#000" text-anchor="middle" font-weight="normal">1</text><rect x="514" y="387" width="23" height="23" fill="#adadad"/><rect x="515" y="388" width="21" height="21" fill="#e1e1e1"/><text transform="translate(525.5,403.0) scale(0.95,1)" font-size="12" fill="#000" text-anchor="middle" font-weight="normal">2</text><rect x="538" y="387" width="23" height="23" fill="#adadad"/><rect x="539" y="388" width="21" height="21" fill="#e1e1e1"/><text transform="translate(549.5,403.0) scale(0.95,1)" font-size="12" fill="#000" text-anchor="middle" font-weight="normal">3</text><rect x="562" y="387" width="47" height="23" fill="#adadad"/><rect x="563" y="388" width="45" height="21" fill="#e1e1e1"/><text transform="translate(585.5,403.0) scale(0.95,1)" font-size="12" fill="#000" text-anchor="middle" font-weight="normal">Hz</text><rect x="490" y="411" width="23" height="23" fill="#adadad"/><rect x="491" y="412" width="21" height="21" fill="#e1e1e1"/><text transform="translate(501.5,427.0) scale(0.95,1)" font-size="12" fill="#000" text-anchor="middle" font-weight="normal">0</text><rect x="514" y="411" width="23" height="23" fill="#adadad"/><rect x="515" y="412" width="21" height="21" fill="#e1e1e1"/><text transform="translate(525.5,427.0) scale(0.95,1)" font-size="12" fill="#000" text-anchor="middle" font-weight="normal">.</text><rect x="538" y="411" width="23" height="23" fill="#adadad"/><rect x="539" y="412" width="21" height="21" fill="#e1e1e1"/><text transform="translate(549.5,427.0) scale(0.95,1)" font-size="12" fill="#000" text-anchor="middle" font-weight="normal"></text><rect x="562" y="411" width="47" height="23" fill="#adadad"/><rect x="563" y="412" width="45" height="21" fill="#e1e1e1"/><text transform="translate(585.5,427.0) scale(0.95,1)" font-size="12" fill="#000" text-anchor="middle" font-weight="normal">Esc</text><rect x="547" y="420" width="1" height="1" fill="#000"/><rect x="548" y="421" width="1" height="1" fill="#000"/><rect x="549" y="422" width="1" height="1" fill="#000"/><rect x="550" y="423" width="1" height="1" fill="#000"/><rect x="549" y="424" width="1" height="1" fill="#000"/><rect x="548" y="425" width="1" height="1" fill="#000"/><rect x="547" y="426" width="1" height="1" fill="#000"/><rect x="281" y="450" width="336" height="1" fill="#a0a0a0"/><rect x="281" y="450" width="1" height="40" fill="#a0a0a0"/><rect x="281" y="490" width="337" height="1" fill="#ffffff"/><rect x="617" y="450" width="1" height="41" fill="#ffffff"/><text x="290.5" y="478" font-size="20.7" fill="#000" text-anchor="start" font-weight="bold">SoDiRa 0.099</text><text x="426" y="477" font-size="10.7" fill="#000" text-anchor="start" font-weight="normal">www.dsp4swls.de</text><rect x="522" y="459" width="87" height="23" fill="#adadad"/><rect x="523" y="460" width="85" height="21" fill="#e1e1e1"/><text transform="translate(565.5,475.0) scale(0.88,1)" font-size="12" fill="#000" text-anchor="middle" font-weight="normal">Configuration</text><rect x="625" y="327" width="160" height="1" fill="#a0a0a0"/><rect x="625" y="327" width="1" height="82" fill="#a0a0a0"/><rect x="625" y="408" width="160" height="1" fill="#a0a0a0"/><rect x="784" y="327" width="1" height="82" fill="#a0a0a0"/><rect x="626" y="328" width="158" height="1" fill="#ffffff"/><rect x="626" y="328" width="1" height="80" fill="#ffffff"/><rect x="625" y="409" width="161" height="1" fill="#ffffff"/><rect x="785" y="327" width="1" height="83" fill="#ffffff"/><rect x="631" y="324" width="51" height="6" fill="#f0f0f0"/><text transform="translate(633,333) scale(0.91,1)" font-size="12" fill="#000" text-anchor="start" font-weight="normal">Wave File</text><rect x="634" y="339" width="31" height="23" fill="#adadad"/><rect x="635" y="340" width="29" height="21" fill="#e1e1e1"/><text transform="translate(649.5,355.0) scale(0.95,1)" font-size="12" fill="#000" text-anchor="middle" font-weight="normal">Play</text><rect x="666" y="339" width="39" height="23" fill="#adadad"/><rect x="667" y="340" width="37" height="21" fill="#e1e1e1"/><text transform="translate(685.5,355.0) scale(0.95,1)" font-size="12" fill="#000" text-anchor="middle" font-weight="normal">Stop</text><rect x="706" y="339" width="31" height="23" fill="#adadad"/><rect x="707" y="340" width="29" height="21" fill="#e1e1e1"/><text transform="translate(721.5,355.0) scale(0.95,1)" font-size="12" fill="#000" text-anchor="middle" font-weight="normal">Rec</text><rect x="746" y="339" width="31" height="23" fill="#c0c0c0"/><rect x="747" y="340" width="29" height="21" fill="#cccccc"/><text transform="translate(761.5,355.0) scale(0.95,1)" font-size="12" fill="#838383" text-anchor="middle" font-weight="normal">I/Q</text><text transform="translate(633.5,381) scale(0.875,1)" font-size="12" fill="#000" text-anchor="start" font-weight="normal">time: 00:00:00</text><rect x="632" y="385" width="146" height="1" fill="#a0a0a0"/><rect x="632" y="385" width="1" height="18" fill="#a0a0a0"/><rect x="632" y="403" width="147" height="1" fill="#ffffff"/><rect x="778" y="385" width="1" height="19" fill="#ffffff"/><rect x="650" y="387" width="17" height="15" fill="#cdcdcd"/><path d="M643.5,390.5 L639.5,394.5 L643.5,398.5" stroke="#606060" stroke-width="2" fill="none" shape-rendering="auto"/><path d="M767.5,390.5 L771.5,394.5 L767.5,398.5" stroke="#606060" stroke-width="2" fill="none" shape-rendering="auto"/><rect x="625" y="423" width="160" height="1" fill="#a0a0a0"/><rect x="625" y="423" width="1" height="67" fill="#a0a0a0"/><rect x="625" y="489" width="160" height="1" fill="#a0a0a0"/><rect x="784" y="423" width="1" height="67" fill="#a0a0a0"/><rect x="626" y="424" width="158" height="1" fill="#ffffff"/><rect x="626" y="424" width="1" height="65" fill="#ffffff"/><rect x="625" y="490" width="161" height="1" fill="#ffffff"/><rect x="785" y="423" width="1" height="68" fill="#ffffff"/><rect x="631" y="420" width="122" height="6" fill="#f0f0f0"/><text transform="translate(633,429) scale(0.91,1)" font-size="12" fill="#000" text-anchor="start" font-weight="normal">Demod/Decode Selector</text><rect x="634" y="435" width="143" height="23" fill="#adadad"/><rect x="635" y="436" width="141" height="21" fill="#e1e1e1"/><text transform="translate(705.5,451.0) scale(0.91,1)" font-size="12" fill="#000" text-anchor="middle" font-weight="normal">Dialog Window</text><rect x="633" y="462" width="145" height="21" fill="#7a7a7a"/><rect x="634" y="463" width="143" height="19" fill="#ffffff"/><text transform="translate(635.5,476) scale(0.93,1)" font-size="12" fill="#000" text-anchor="start" font-weight="normal">AM Radio</text><path d="M765,471 L769,475 L773,471" stroke="#505050" stroke-width="1" fill="none"/></svg></body></html>
